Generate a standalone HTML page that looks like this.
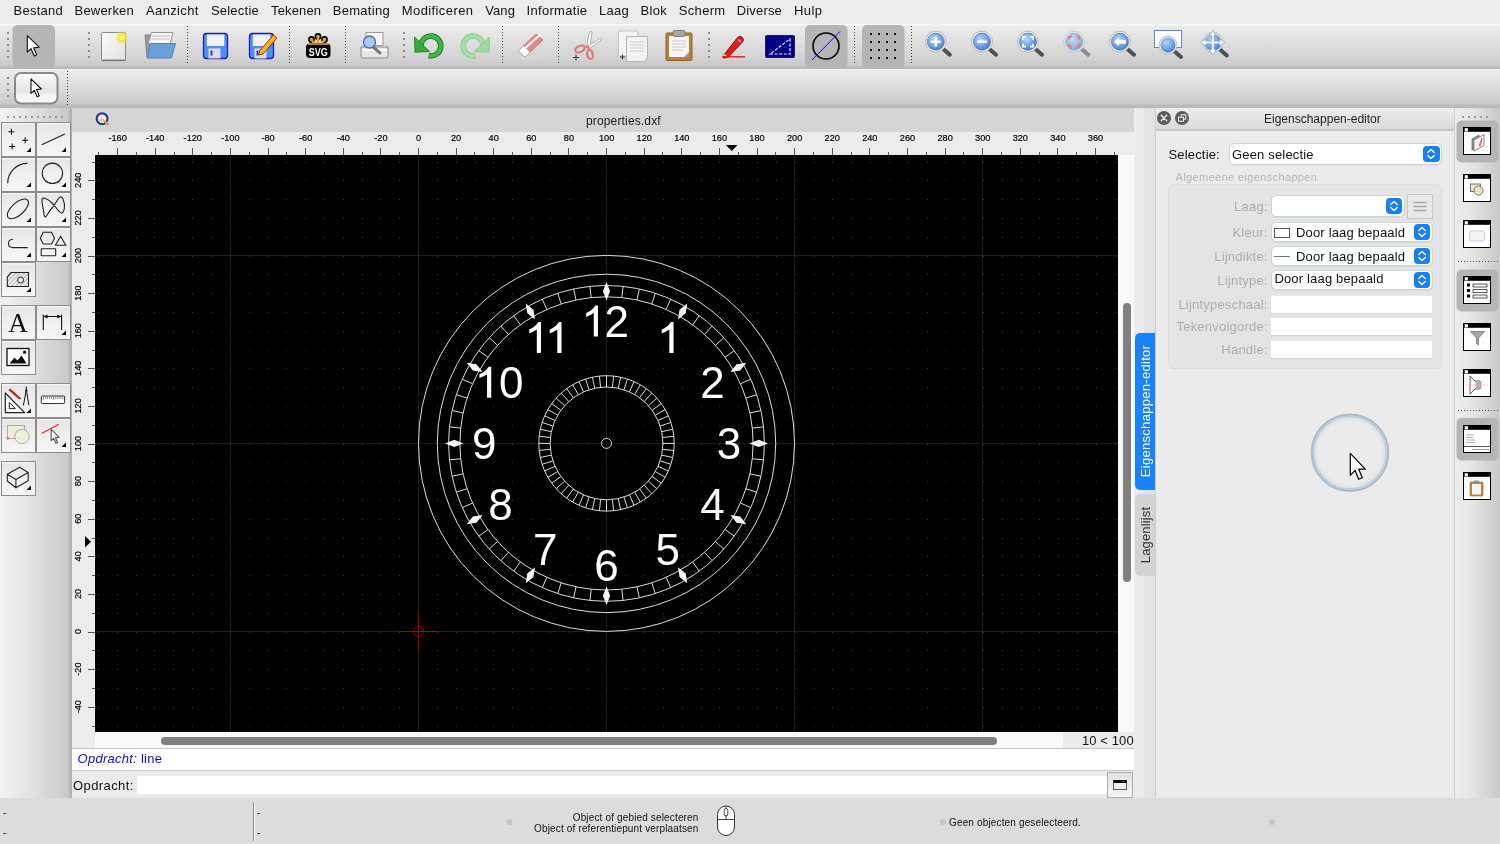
<!DOCTYPE html><html><head><meta charset="utf-8"><style>
*{margin:0;padding:0;box-sizing:border-box}
html,body{width:1500px;height:844px;overflow:hidden;background:#ececec;font-family:"Liberation Sans",sans-serif;color:#222}
.abs{position:absolute;display:block}
.t{position:absolute;white-space:pre;line-height:1}
</style></head><body><div id="root" style="position:absolute;left:0;top:0;width:1500px;height:844px;overflow:hidden;will-change:transform"><div class="abs" style="left:0;top:0;width:1500px;height:24px;background:#ececec"></div><div class="t" style="left:13.5px;top:4px;font-size:13px;color:#111;letter-spacing:0.25px">Bestand</div><div class="t" style="left:74.5px;top:4px;font-size:13px;color:#111;letter-spacing:0.21px">Bewerken</div><div class="t" style="left:146.0px;top:4px;font-size:13px;color:#111;letter-spacing:0.37px">Aanzicht</div><div class="t" style="left:210.9px;top:4px;font-size:13px;color:#111;letter-spacing:0.23px">Selectie</div><div class="t" style="left:271.1px;top:4px;font-size:13px;color:#111;letter-spacing:0.13px">Tekenen</div><div class="t" style="left:332.7px;top:4px;font-size:13px;color:#111;letter-spacing:0.3px">Bemating</div><div class="t" style="left:401.8px;top:4px;font-size:13px;color:#111;letter-spacing:0.4px">Modificeren</div><div class="t" style="left:485.2px;top:4px;font-size:13px;color:#111;letter-spacing:0.1px">Vang</div><div class="t" style="left:526.5px;top:4px;font-size:13px;color:#111;letter-spacing:0.31px">Informatie</div><div class="t" style="left:599.0px;top:4px;font-size:13px;color:#111;letter-spacing:0.27px">Laag</div><div class="t" style="left:640.6px;top:4px;font-size:13px;color:#111;letter-spacing:0.33px">Blok</div><div class="t" style="left:678.8px;top:4px;font-size:13px;color:#111;letter-spacing:0.32px">Scherm</div><div class="t" style="left:736.8px;top:4px;font-size:13px;color:#111;letter-spacing:0.15px">Diverse</div><div class="t" style="left:794.0px;top:4px;font-size:13px;color:#111;letter-spacing:0.4px">Hulp</div><div class="abs" style="left:0;top:24px;width:1500px;height:45px;background:linear-gradient(#f8f8f8 0,#f8f8f8 1px,#ebebeb 2px,#d3d3d3 34px,#c8c8c8 42px,#bababa 43px,#bababa 45px)"></div><div class="abs" style="left:0;top:69px;width:1500px;height:39px;background:linear-gradient(#f2f2f2 0,#ebebeb 2px,#d5d5d5 26px,#c9c9c9 35px,#bababa 36px,#bababa 39px)"></div><svg class="abs" style="left:0;top:24px" width="1500" height="84" viewBox="0 24 1500 84"><defs><linearGradient id="gblue" x1="0" y1="0" x2="0" y2="1"><stop offset="0" stop-color="#8ec0ff"/><stop offset="1" stop-color="#3a7fe8"/></linearGradient><radialGradient id="glens" cx="0.4" cy="0.35" r="0.7"><stop offset="0" stop-color="#b8d6f8"/><stop offset="0.6" stop-color="#6fa3e6"/><stop offset="1" stop-color="#3f78c8"/></radialGradient><radialGradient id="glow" cx="0.5" cy="0.5" r="0.5"><stop offset="0" stop-color="#fffbd0"/><stop offset="0.45" stop-color="#f0ea30"/><stop offset="1" stop-color="#f0ea30" stop-opacity="0"/></radialGradient><linearGradient id="gpaper" x1="0" y1="0" x2="1" y2="1"><stop offset="0" stop-color="#fafafa"/><stop offset="1" stop-color="#e2e2e2"/></linearGradient></defs><rect x="7" y="32" width="2" height="2" fill="#8c8c8c"/><rect x="7" y="38" width="2" height="2" fill="#8c8c8c"/><rect x="7" y="44" width="2" height="2" fill="#8c8c8c"/><rect x="7" y="50" width="2" height="2" fill="#8c8c8c"/><rect x="7" y="56" width="2" height="2" fill="#8c8c8c"/><rect x="12.5" y="25" width="42.5" height="43" rx="5" fill="#b5b5b5"/><path d="M27.30 35.60L27.30 52.20L31.00 48.70L34.30 55.90L36.70 54.80L33.60 47.90L39.10 47.20Z" fill="#fff" stroke="#111" stroke-width="1.1" stroke-linejoin="round"/><rect x="88" y="32" width="2" height="2" fill="#8c8c8c"/><rect x="88" y="38" width="2" height="2" fill="#8c8c8c"/><rect x="88" y="44" width="2" height="2" fill="#8c8c8c"/><rect x="88" y="50" width="2" height="2" fill="#8c8c8c"/><rect x="88" y="56" width="2" height="2" fill="#8c8c8c"/><rect x="101.5" y="32.5" width="24" height="27.5" rx="1" fill="url(#gpaper)" stroke="#8a8a8a" stroke-width="1"/><path d="M102 60.5H125.5" stroke="#777" stroke-width="1.2"/><circle cx="121.7" cy="37.6" r="7" fill="url(#glow)"/><path d="M145 35H151L150 57H147Z" fill="#9a9a9a" stroke="#777" stroke-width="0.8"/><path d="M151.5 32.5H173L170 44H148Z" fill="#f6f6f6" stroke="#8a8a8a" stroke-width="0.9"/><path d="M152 36H170M151.5 39H169" stroke="#bdbdbd" stroke-width="1"/><path d="M150 43.5H175.5L171.5 58H147Z" fill="#6c9fd8" stroke="#4d7fc0" stroke-width="0.9"/><path d="M187.5 26V63" stroke="#444" stroke-width="1" stroke-dasharray="1 2"/><rect x="203.5" y="33.5" width="24" height="25" rx="3" fill="#4d90f4" stroke="#2020a8" stroke-width="1.3"/><rect x="206.8" y="34.5" width="17.5" height="11.5" fill="#eef2ff"/><rect x="208.5" y="48.5" width="12" height="10" fill="#dcdce8"/><rect x="210.5" y="50.5" width="2" height="5" fill="#1a3fd0"/><rect x="249.5" y="33.5" width="24" height="25" rx="3" fill="#4d90f4" stroke="#2020a8" stroke-width="1.3"/><rect x="252.8" y="34.5" width="17.5" height="11.5" fill="#eef2ff"/><rect x="254.5" y="48.5" width="12" height="10" fill="#dcdce8"/><rect x="256.5" y="50.5" width="2" height="5" fill="#1a3fd0"/><path d="M259.5 51L273.5 35L277 38L263 54L258.5 55Z" fill="#f6b820" stroke="#b02a10" stroke-width="1"/><path d="M289.5 26V63" stroke="#444" stroke-width="1" stroke-dasharray="1 2"/><g fill="#f0a030" stroke="#000" stroke-width="1.6"><circle cx="318" cy="36.5" r="2.6"/><circle cx="311.5" cy="39.5" r="2.6"/><circle cx="324.5" cy="39.5" r="2.6"/><path d="M318 37V45M311.5 40L316 45M324.5 40L320 45" stroke-width="2.2" stroke="#f0a030"/></g><rect x="306" y="43.5" width="24.5" height="14.5" rx="4" fill="#000"/><path d="M308 44.2H328.5" stroke="#f0a030" stroke-width="1.2"/><text x="318.2" y="56.2" font-family="Liberation Sans" font-weight="bold" font-size="11" fill="#fff" text-anchor="middle" textLength="19" lengthAdjust="spacingAndGlyphs">SVG</text><path d="M345.5 26V63" stroke="#444" stroke-width="1" stroke-dasharray="1 2"/><rect x="366" y="32.5" width="17" height="13" fill="#f4f4f4" stroke="#9a9a9a" stroke-width="1"/><path d="M361 47H388V56Q388 58 386 58H363Q361 58 361 56Z" fill="#e8e8e8" stroke="#8a8a8a" stroke-width="1"/><path d="M363 50H386" stroke="#fff" stroke-width="1.5"/><path d="M372 46L380 53" stroke="#777" stroke-width="3" stroke-linecap="round"/><circle cx="369.5" cy="42" r="6" fill="#a9c9f0" stroke="#4a6fa8" stroke-width="1.3"/><rect x="403" y="32" width="2" height="2" fill="#8c8c8c"/><rect x="403" y="38" width="2" height="2" fill="#8c8c8c"/><rect x="403" y="44" width="2" height="2" fill="#8c8c8c"/><rect x="403" y="50" width="2" height="2" fill="#8c8c8c"/><rect x="403" y="56" width="2" height="2" fill="#8c8c8c"/><path d="M421 45.5A9.9 9.9 0 1 1 428.6 55.6" fill="none" stroke="#1f7f22" stroke-width="5.6"/><path d="M421 45.5A9.9 9.9 0 1 1 428.6 55.6" fill="none" stroke="#45b548" stroke-width="3.6"/><path d="M414.5 37L415 52.2L429.5 51.5Z" fill="#3aa83d" stroke="#1f7f22" stroke-width="0.9" stroke-linejoin="round"/><path d="M483 45.5A9.9 9.9 0 1 0 475.4 55.6" fill="none" stroke="#8ccc8e" stroke-width="5.6"/><path d="M483 45.5A9.9 9.9 0 1 0 475.4 55.6" fill="none" stroke="#a8dca8" stroke-width="3.6"/><path d="M489.5 37L489 52.2L474.5 51.5Z" fill="#a0d8a2" stroke="#88c88a" stroke-width="0.9" stroke-linejoin="round"/><path d="M502.5 26V63" stroke="#444" stroke-width="1" stroke-dasharray="1 2"/><ellipse cx="530" cy="57" rx="12" ry="1.8" fill="#d8d8d8"/><path d="M518 51L536 34L543 40L525 57Z" fill="#e28a8a" stroke="#c07070" stroke-width="0.8"/><path d="M518 51L523.5 46L530 52L525 57Z" fill="#f8f8f8" stroke="#b0b0b0" stroke-width="0.8"/><path d="M524 49L540 35" stroke="#f6f6f6" stroke-width="2"/><path d="M558.5 26V63" stroke="#444" stroke-width="1" stroke-dasharray="1 2"/><path d="M586.5 47L589.5 31.5L592 32L590 47.5Z" fill="#fafafa" stroke="#a8a8a8" stroke-width="0.9" stroke-linejoin="round"/><path d="M587.5 46.5L600.5 38L601.5 40L589.5 48.5Z" fill="#fafafa" stroke="#a8a8a8" stroke-width="0.9" stroke-linejoin="round"/><g fill="none" stroke="#e07a7a" stroke-width="2.2"><ellipse cx="580" cy="49" rx="5" ry="3" transform="rotate(-25 580 49)"/><ellipse cx="590" cy="54.5" rx="2.8" ry="4.6" transform="rotate(-10 590 54.5)"/><path d="M584.5 47.5L588 46.5L589 50"/></g><path d="M573 57.5H579M576 54.5V60.5" stroke="#333" stroke-width="1"/><path d="M618.5 31H638V56H618.5Z" fill="#f4f4f4" stroke="#c4c4c4" stroke-width="1"/><path d="M626.5 36.5H647.5V58L644 61.5H626.5Z" fill="#f2f2f2" stroke="#b4b4b4" stroke-width="1"/><path d="M630 42H644M630 45H644M630 48H644M630 51H644" stroke="#cfcfcf" stroke-width="1"/><path d="M620 57H625M622.5 54.5V59.5" stroke="#333" stroke-width="1"/><rect x="666" y="33" width="26" height="27.5" rx="1.5" fill="#b8803a" stroke="#8e5e20" stroke-width="1"/><path d="M669 36H689V57H669Z" fill="#f6f6f6"/><path d="M672 41H686M672 44H686M672 47H686M672 50H683" stroke="#c8c8c8" stroke-width="1"/><rect x="673" y="30.5" width="12" height="6" rx="1.5" fill="#a8a8a0" stroke="#707070" stroke-width="0.8"/><path d="M684 57L689 52V57Z" fill="#9a9a9a"/><rect x="708" y="32" width="2" height="2" fill="#8c8c8c"/><rect x="708" y="38" width="2" height="2" fill="#8c8c8c"/><rect x="708" y="44" width="2" height="2" fill="#8c8c8c"/><rect x="708" y="50" width="2" height="2" fill="#8c8c8c"/><rect x="708" y="56" width="2" height="2" fill="#8c8c8c"/><path d="M723 56L737.5 37.5Q740 35 742.5 37.5Q744.5 40 742.5 42L728 57.5L723 58Z" fill="#d82020" stroke="#801010" stroke-width="0.9"/><path d="M723 56L728 57.5L726 55L724 54Z" fill="#f0d090"/><path d="M738 39.5L741 42" stroke="#f0b0b0" stroke-width="1.5"/><path d="M723 56.8H745" stroke="#e01010" stroke-width="1.3"/><rect x="765.5" y="35.5" width="29" height="22" rx="1" fill="#00008a" stroke="#202040" stroke-width="1"/><path d="M770 54H790V39Z" fill="none" stroke="#e8e8f8" stroke-width="1.2" stroke-dasharray="3 1.6"/><rect x="805" y="25" width="42.5" height="43" rx="5" fill="#b5b5b5"/><circle cx="826" cy="46" r="13" fill="none" stroke="#000" stroke-width="1.6"/><path d="M812 60L840 31.5" stroke="#1010ff" stroke-width="1"/><path d="M854.5 26V63" stroke="#444" stroke-width="1" stroke-dasharray="1 2"/><rect x="862" y="25" width="42.5" height="43" rx="5" fill="#b5b5b5"/><rect x="870" y="33" width="2" height="2" fill="#111"/><rect x="870" y="41" width="2" height="2" fill="#111"/><rect x="870" y="49" width="2" height="2" fill="#111"/><rect x="870" y="57" width="2" height="2" fill="#111"/><rect x="878" y="33" width="2" height="2" fill="#111"/><rect x="878" y="41" width="2" height="2" fill="#111"/><rect x="878" y="49" width="2" height="2" fill="#111"/><rect x="878" y="57" width="2" height="2" fill="#111"/><rect x="886" y="33" width="2" height="2" fill="#111"/><rect x="886" y="41" width="2" height="2" fill="#111"/><rect x="886" y="49" width="2" height="2" fill="#111"/><rect x="886" y="57" width="2" height="2" fill="#111"/><rect x="894" y="33" width="2" height="2" fill="#111"/><rect x="894" y="41" width="2" height="2" fill="#111"/><rect x="894" y="49" width="2" height="2" fill="#111"/><rect x="894" y="57" width="2" height="2" fill="#111"/><path d="M911.5 26V63" stroke="#444" stroke-width="1" stroke-dasharray="1 2"/><g><path d="M941.8 47.7L949.8 54.7" stroke="#505050" stroke-width="4" stroke-linecap="round"/><circle cx="935.8" cy="41.7" r="10.5" fill="#f0f0ea" stroke="#b8b8b0" stroke-width="1"/><circle cx="935.8" cy="41.7" r="8.5" fill="url(#glens)" stroke="#4a78b8" stroke-width="0.8"/><path d="M930.8 41.7H940.8M935.8 36.7V46.7" stroke="#fff" stroke-width="2.6"/></g><g><path d="M988 47.7L996 54.7" stroke="#505050" stroke-width="4" stroke-linecap="round"/><circle cx="982" cy="41.7" r="10.5" fill="#f0f0ea" stroke="#b8b8b0" stroke-width="1"/><circle cx="982" cy="41.7" r="8.5" fill="url(#glens)" stroke="#4a78b8" stroke-width="0.8"/><path d="M977 41.7H987" stroke="#fff" stroke-width="2.6"/></g><g><path d="M1034 47.7L1042 54.7" stroke="#505050" stroke-width="4" stroke-linecap="round"/><circle cx="1028" cy="41.7" r="10.5" fill="#f0f0ea" stroke="#b8b8b0" stroke-width="1"/><circle cx="1028" cy="41.7" r="8.5" fill="url(#glens)" stroke="#4a78b8" stroke-width="0.8"/><path d="M1023 39.7V36.7H1026M1030 36.7H1033V39.7M1033 43.7V46.7H1030M1026 46.7H1023V43.7" fill="none" stroke="#fff" stroke-width="1.8"/></g><g opacity="0.55"><path d="M1080.2 47.7L1088.2 54.7" stroke="#505050" stroke-width="4" stroke-linecap="round"/><circle cx="1074.2" cy="41.7" r="10.5" fill="#f0f0ea" stroke="#b8b8b0" stroke-width="1"/><circle cx="1074.2" cy="41.7" r="8.5" fill="url(#glens)" stroke="#4a78b8" stroke-width="0.8"/><path d="M1069.2 39.7V36.7H1072.2M1076.2 36.7H1079.2V39.7M1079.2 43.7V46.7H1076.2M1072.2 46.7H1069.2V43.7" fill="none" stroke="#e83030" stroke-width="1.8"/></g><g><path d="M1126 47.7L1134 54.7" stroke="#505050" stroke-width="4" stroke-linecap="round"/><circle cx="1120" cy="41.7" r="10.5" fill="#f0f0ea" stroke="#b8b8b0" stroke-width="1"/><circle cx="1120" cy="41.7" r="8.5" fill="url(#glens)" stroke="#4a78b8" stroke-width="0.8"/><path d="M1114 41.7L1119 37.2V39.7H1126V43.7H1119V46.2Z" fill="#fff"/></g><rect x="1154.5" y="30.5" width="27" height="17" fill="#fff" stroke="#5a8ad0" stroke-width="1"/><path d="M1174 51L1181 57" stroke="#505050" stroke-width="4" stroke-linecap="round"/><circle cx="1168" cy="45" r="9" fill="#f0f0ea" stroke="#b8b8b0" stroke-width="1"/><circle cx="1168" cy="45" r="7.5" fill="url(#glens)"/><path d="M1218.8 48.5L1226.8 55.5" stroke="#505050" stroke-width="4" stroke-linecap="round"/><circle cx="1212.8" cy="42.5" r="10" fill="#e8e8e0" stroke="#b8b8b0" stroke-width="1"/><circle cx="1212.8" cy="42.5" r="8.5" fill="url(#glens)"/><path d="M1212.8 30.5L1216.3 35.5H1214.1V41.2H1219.8V39.0L1224.8 42.5L1219.8 46.0V43.8H1214.1V49.5H1216.3L1212.8 54.5L1209.3 49.5H1211.5V43.8H1205.8V46.0L1200.8 42.5L1205.8 39.0V41.2H1211.5V35.5H1209.3Z" fill="#fff" stroke="#6a9ad8" stroke-width="0.6"/><rect x="7" y="77" width="2" height="2" fill="#8c8c8c"/><rect x="7" y="83" width="2" height="2" fill="#8c8c8c"/><rect x="7" y="89" width="2" height="2" fill="#8c8c8c"/><rect x="7" y="95" width="2" height="2" fill="#8c8c8c"/><rect x="15" y="73" width="42.5" height="30.5" rx="6" fill="url(#gbtn2)" stroke="#8a8a8a" stroke-width="2"/><defs><linearGradient id="gbtn2" x1="0" y1="0" x2="0" y2="1"><stop offset="0" stop-color="#fbfbfb"/><stop offset="0.62" stop-color="#e4e4e4"/><stop offset="0.75" stop-color="#f6f6f6"/><stop offset="1" stop-color="#f8f8f8"/></linearGradient></defs><path d="M31.00 78.80L31.00 93.41L34.26 90.33L37.16 96.66L39.27 95.70L36.54 89.62L41.38 89.01Z" fill="#fff" stroke="#111" stroke-width="1.1" stroke-linejoin="round"/><path d="M67.5 71V105" stroke="#444" stroke-width="1" stroke-dasharray="1 2"/></svg><div class="abs" style="left:0;top:108px;width:72px;height:690px;background:linear-gradient(90deg,#f2f2f2,#e8e8e8 30%,#c9c9c9 68px,#b3b3b3 70px,#b3b3b3)"></div><svg class="abs" style="left:0;top:108px" width="72" height="690" viewBox="0 108 72 690"><defs><linearGradient id="gpb" x1="0" y1="0" x2="0" y2="1"><stop offset="0" stop-color="#fdfdfd"/><stop offset="0.08" stop-color="#e6e6e6"/><stop offset="0.45" stop-color="#efefef"/><stop offset="1" stop-color="#f6f6f6"/></linearGradient></defs><rect x="7" y="116" width="2" height="2" fill="#9a9a9a"/><rect x="13" y="116" width="2" height="2" fill="#9a9a9a"/><rect x="19" y="116" width="2" height="2" fill="#9a9a9a"/><rect x="25" y="116" width="2" height="2" fill="#9a9a9a"/><rect x="31" y="116" width="2" height="2" fill="#9a9a9a"/><rect x="37" y="116" width="2" height="2" fill="#9a9a9a"/><rect x="43" y="116" width="2" height="2" fill="#9a9a9a"/><rect x="49" y="116" width="2" height="2" fill="#9a9a9a"/><rect x="55" y="116" width="2" height="2" fill="#9a9a9a"/><rect x="61" y="116" width="2" height="2" fill="#9a9a9a"/><rect x="1.5" y="122.5" width="34" height="34" fill="url(#gpb)" stroke="#8c8c8c" stroke-width="1"/><rect x="36.5" y="122.5" width="34" height="34" fill="url(#gpb)" stroke="#8c8c8c" stroke-width="1"/><rect x="1.5" y="157.5" width="34" height="34" fill="url(#gpb)" stroke="#8c8c8c" stroke-width="1"/><rect x="36.5" y="157.5" width="34" height="34" fill="url(#gpb)" stroke="#8c8c8c" stroke-width="1"/><rect x="1.5" y="192.5" width="34" height="34" fill="url(#gpb)" stroke="#8c8c8c" stroke-width="1"/><rect x="36.5" y="192.5" width="34" height="34" fill="url(#gpb)" stroke="#8c8c8c" stroke-width="1"/><rect x="1.5" y="227.5" width="34" height="34" fill="url(#gpb)" stroke="#8c8c8c" stroke-width="1"/><rect x="36.5" y="227.5" width="34" height="34" fill="url(#gpb)" stroke="#8c8c8c" stroke-width="1"/><rect x="1.5" y="262.5" width="34" height="34" fill="url(#gpb)" stroke="#8c8c8c" stroke-width="1"/><rect x="1.5" y="305.5" width="34" height="34" fill="url(#gpb)" stroke="#8c8c8c" stroke-width="1"/><rect x="36.5" y="305.5" width="34" height="34" fill="url(#gpb)" stroke="#8c8c8c" stroke-width="1"/><rect x="1.5" y="340.5" width="34" height="34" fill="url(#gpb)" stroke="#8c8c8c" stroke-width="1"/><rect x="1.5" y="383.5" width="34" height="34" fill="url(#gpb)" stroke="#8c8c8c" stroke-width="1"/><rect x="36.5" y="383.5" width="34" height="34" fill="url(#gpb)" stroke="#8c8c8c" stroke-width="1"/><rect x="1.5" y="418.5" width="34" height="34" fill="url(#gpb)" stroke="#8c8c8c" stroke-width="1"/><rect x="36.5" y="418.5" width="34" height="34" fill="url(#gpb)" stroke="#8c8c8c" stroke-width="1"/><rect x="1.5" y="461.5" width="34" height="34" fill="url(#gpb)" stroke="#8c8c8c" stroke-width="1"/><path d="M8.4 131.7H14.4M11.4 128.7V134.7" stroke="#111" stroke-width="1.1"/><path d="M22.2 140.3H28.2M25.2 137.3V143.3" stroke="#111" stroke-width="1.1"/><path d="M9.2 146.5H15.2M12.2 143.5V149.5" stroke="#111" stroke-width="1.1"/><path d="M26.5 152H31V147.5Z" fill="#000"/><path d="M61.5 152H66V147.5Z" fill="#000"/><path d="M41.7 144.7L64.9 134" stroke="#222" fill="none" stroke-width="1.2"/><path d="M7.7 183.2A19.8 19.8 0 0 1 27.5 163.4" stroke="#222" fill="none" stroke-width="1.2"/><path d="M26.5 187H31V182.5Z" fill="#000"/><path d="M61.5 187H66V182.5Z" fill="#000"/><circle cx="52.4" cy="173.3" r="10.2" stroke="#222" fill="none" stroke-width="1.1"/><ellipse cx="17.9" cy="208.9" rx="13" ry="6.2" transform="rotate(-42 17.9 208.9)" stroke="#222" fill="none" stroke-width="1.1"/><path d="M26.5 222H31V217.5Z" fill="#000"/><path d="M61.5 222H66V217.5Z" fill="#000"/><path d="M42 201C41 196 47 198 52 203S60 214 62 213S66 206 63 199S56 204 52 208S45 222 44 214S42 205 42 201Z" stroke="#222" fill="none" stroke-width="1.1"/><path d="M13 239.3Q8.5 239.5 8.5 243.5Q8.5 247.6 13 247.6H27.8" stroke="#222" fill="none" stroke-width="1.1"/><path d="M26.5 257H31V252.5Z" fill="#000"/><path d="M61.5 257H66V252.5Z" fill="#000"/><path d="M43.2 232.3H51.5L54.5 238.2L51.5 244H43.2L40.3 238.2Z" stroke="#222" fill="none" stroke-width="1.1"/><path d="M60.6 236.3L65.8 245.2H55.4Z" stroke="#222" fill="none" stroke-width="1.1"/><rect x="41.2" y="248.8" width="14.5" height="7" rx="0.5" stroke="#222" fill="none" stroke-width="1.1"/><defs><pattern id="hp" width="3" height="3" patternUnits="userSpaceOnUse" patternTransform="rotate(45)"><path d="M0 0V3" stroke="#555" stroke-width="0.8"/></pattern></defs><path d="M11 272.5H28.5V286.5H7.3V277Z" fill="url(#hp)" stroke="#222" stroke-width="1.1"/><circle cx="20.5" cy="280" r="3" fill="#f0f0f0" stroke="#222" stroke-width="1"/><path d="M26.5 292H31V287.5Z" fill="#000"/><text x="17.9" y="332" font-family="Liberation Serif" font-size="27" fill="#111" text-anchor="middle">A</text><path d="M43.3 314.5V330M61.6 314.5V330M44 316.5H61" stroke="#111" stroke-width="1.1"/><path d="M43.5 316.5L47.5 314.5V318.5ZM61.3 316.5L57.3 314.5V318.5Z" fill="#111"/><path d="M61.5 335H66V330.5Z" fill="#000"/><rect x="7" y="348.5" width="22" height="17" fill="#fff" stroke="#111" stroke-width="1.3"/><path d="M9.5 363.5L14.5 357.5L17.5 360.5L21.5 355.5L26.5 363.5Z" fill="#111"/><circle cx="24.6" cy="352.2" r="1.6" fill="#111"/><path d="M5.3 393V412.6H24.6Z" fill="#fff" stroke="#222" stroke-width="1.2" stroke-linejoin="round"/><path d="M9.3 402.4V408.6H15.4Z" fill="#eee" stroke="#222" stroke-width="1"/><path d="M10 388.8L19.6 397.3L21 399L18.5 398.4L9 390.2Z" fill="#e02020" stroke="#a01010" stroke-width="0.7"/><path d="M26.3 386.5V390M26.3 390L23.4 405.5M26.3 390L28.9 405.3" stroke="#111" stroke-width="1"/><circle cx="26.3" cy="390.6" r="1.2" fill="#111"/><path d="M26.5 413H31V408.5Z" fill="#000"/><rect x="41.3" y="396" width="23.3" height="7.5" rx="0.8" fill="#fff" stroke="#333" stroke-width="1"/><path d="M43.3 396.5V400M45.4 396.5V399M47.5 396.5V399M49.6 396.5V399M51.7 396.5V399M53.8 396.5V400M55.9 396.5V399M58.0 396.5V399M60.1 396.5V399M62.2 396.5V399M64.3 396.5V400" stroke="#333" stroke-width="0.6"/><rect x="7.5" y="425.5" width="17" height="13" fill="#f0ecd8" stroke="#999" stroke-width="0.8"/><circle cx="22" cy="436.5" r="7.2" fill="#f2eed8" fill-opacity="0.9" stroke="#999" stroke-width="0.8"/><circle cx="7.8" cy="438.4" r="1.3" fill="#f07070"/><path d="M41.7 433.4L58.7 424.3" stroke="#e82020" stroke-width="1.1"/><path d="M51.20 429.40L51.20 440.69L53.72 438.31L55.96 443.20L57.59 442.46L55.48 437.76L59.22 437.29Z" fill="#fff" stroke="#555" stroke-width="1.1" stroke-linejoin="round"/><path d="M61.5 447H66V442.5Z" fill="#000"/><path d="M7.3 474.3L19.6 467.3L28.2 472.5L15.9 479.5ZM7.3 474.3V481L15.9 487.8V479.5M15.9 487.8L28.2 480.8V472.5" fill="none" stroke="#222" stroke-width="1.1" stroke-linejoin="round"/><path d="M26.5 490H31V485.5Z" fill="#000"/></svg><div class="abs" style="left:72px;top:108px;width:1062px;height:24px;background:#d5d5d5"></div><div class="t" style="left:586px;top:115px;font-size:12px;color:#1a1a1a;letter-spacing:0.15px">properties.dxf</div><svg class="abs" style="left:94px;top:111px" width="17" height="17" viewBox="94 111 17 17"><circle cx="102.1" cy="118.7" r="5.4" fill="#f6f6f6" stroke="#2a3f8a" stroke-width="2.2"/><path d="M98.5 119.5H104M101.5 116V121.5" stroke="#b0b0b0" stroke-width="0.6"/><path d="M99 120.5L102 121M103.5 115.5L104.5 117" stroke="#e08080" stroke-width="0.6"/><path d="M102.8 119.3L107 123.5" stroke="#f0b020" stroke-width="1.8"/><circle cx="107.8" cy="124.3" r="1.1" fill="#e07070"/></svg><div class="abs" style="left:72px;top:132px;width:1062px;height:23px;background:#ececec"></div><div class="abs" style="left:72px;top:155px;width:23px;height:593px;background:#ececec"></div><svg class="abs" style="left:95px;top:155px" width="1023" height="577" viewBox="95 155 1023 577"><rect x="95" y="155" width="1023" height="577" fill="#000"/><path d="M230.5 155V732M418.5 155V732M606.5 155V732M794.5 155V732M982.5 155V732M95 631.5H1118M95 443.5H1118M95 255.5H1118" stroke="#1e1e1e" stroke-width="1"/><path d="M98 726h1v1h-1zM98 707h1v1h-1zM98 688h1v1h-1zM98 669h1v1h-1zM98 650h1v1h-1zM98 632h1v1h-1zM98 613h1v1h-1zM98 594h1v1h-1zM98 575h1v1h-1zM98 556h1v1h-1zM98 538h1v1h-1zM98 519h1v1h-1zM98 500h1v1h-1zM98 481h1v1h-1zM98 462h1v1h-1zM98 444h1v1h-1zM98 425h1v1h-1zM98 406h1v1h-1zM98 387h1v1h-1zM98 368h1v1h-1zM98 350h1v1h-1zM98 331h1v1h-1zM98 312h1v1h-1zM98 293h1v1h-1zM98 274h1v1h-1zM98 256h1v1h-1zM98 237h1v1h-1zM98 218h1v1h-1zM98 199h1v1h-1zM98 180h1v1h-1zM98 162h1v1h-1zM117 726h1v1h-1zM117 707h1v1h-1zM117 688h1v1h-1zM117 669h1v1h-1zM117 650h1v1h-1zM117 632h1v1h-1zM117 613h1v1h-1zM117 594h1v1h-1zM117 575h1v1h-1zM117 556h1v1h-1zM117 538h1v1h-1zM117 519h1v1h-1zM117 500h1v1h-1zM117 481h1v1h-1zM117 462h1v1h-1zM117 444h1v1h-1zM117 425h1v1h-1zM117 406h1v1h-1zM117 387h1v1h-1zM117 368h1v1h-1zM117 350h1v1h-1zM117 331h1v1h-1zM117 312h1v1h-1zM117 293h1v1h-1zM117 274h1v1h-1zM117 256h1v1h-1zM117 237h1v1h-1zM117 218h1v1h-1zM117 199h1v1h-1zM117 180h1v1h-1zM117 162h1v1h-1zM136 726h1v1h-1zM136 707h1v1h-1zM136 688h1v1h-1zM136 669h1v1h-1zM136 650h1v1h-1zM136 632h1v1h-1zM136 613h1v1h-1zM136 594h1v1h-1zM136 575h1v1h-1zM136 556h1v1h-1zM136 538h1v1h-1zM136 519h1v1h-1zM136 500h1v1h-1zM136 481h1v1h-1zM136 462h1v1h-1zM136 444h1v1h-1zM136 425h1v1h-1zM136 406h1v1h-1zM136 387h1v1h-1zM136 368h1v1h-1zM136 350h1v1h-1zM136 331h1v1h-1zM136 312h1v1h-1zM136 293h1v1h-1zM136 274h1v1h-1zM136 256h1v1h-1zM136 237h1v1h-1zM136 218h1v1h-1zM136 199h1v1h-1zM136 180h1v1h-1zM136 162h1v1h-1zM154 726h1v1h-1zM154 707h1v1h-1zM154 688h1v1h-1zM154 669h1v1h-1zM154 650h1v1h-1zM154 632h1v1h-1zM154 613h1v1h-1zM154 594h1v1h-1zM154 575h1v1h-1zM154 556h1v1h-1zM154 538h1v1h-1zM154 519h1v1h-1zM154 500h1v1h-1zM154 481h1v1h-1zM154 462h1v1h-1zM154 444h1v1h-1zM154 425h1v1h-1zM154 406h1v1h-1zM154 387h1v1h-1zM154 368h1v1h-1zM154 350h1v1h-1zM154 331h1v1h-1zM154 312h1v1h-1zM154 293h1v1h-1zM154 274h1v1h-1zM154 256h1v1h-1zM154 237h1v1h-1zM154 218h1v1h-1zM154 199h1v1h-1zM154 180h1v1h-1zM154 162h1v1h-1zM173 726h1v1h-1zM173 707h1v1h-1zM173 688h1v1h-1zM173 669h1v1h-1zM173 650h1v1h-1zM173 632h1v1h-1zM173 613h1v1h-1zM173 594h1v1h-1zM173 575h1v1h-1zM173 556h1v1h-1zM173 538h1v1h-1zM173 519h1v1h-1zM173 500h1v1h-1zM173 481h1v1h-1zM173 462h1v1h-1zM173 444h1v1h-1zM173 425h1v1h-1zM173 406h1v1h-1zM173 387h1v1h-1zM173 368h1v1h-1zM173 350h1v1h-1zM173 331h1v1h-1zM173 312h1v1h-1zM173 293h1v1h-1zM173 274h1v1h-1zM173 256h1v1h-1zM173 237h1v1h-1zM173 218h1v1h-1zM173 199h1v1h-1zM173 180h1v1h-1zM173 162h1v1h-1zM192 726h1v1h-1zM192 707h1v1h-1zM192 688h1v1h-1zM192 669h1v1h-1zM192 650h1v1h-1zM192 632h1v1h-1zM192 613h1v1h-1zM192 594h1v1h-1zM192 575h1v1h-1zM192 556h1v1h-1zM192 538h1v1h-1zM192 519h1v1h-1zM192 500h1v1h-1zM192 481h1v1h-1zM192 462h1v1h-1zM192 444h1v1h-1zM192 425h1v1h-1zM192 406h1v1h-1zM192 387h1v1h-1zM192 368h1v1h-1zM192 350h1v1h-1zM192 331h1v1h-1zM192 312h1v1h-1zM192 293h1v1h-1zM192 274h1v1h-1zM192 256h1v1h-1zM192 237h1v1h-1zM192 218h1v1h-1zM192 199h1v1h-1zM192 180h1v1h-1zM192 162h1v1h-1zM211 726h1v1h-1zM211 707h1v1h-1zM211 688h1v1h-1zM211 669h1v1h-1zM211 650h1v1h-1zM211 632h1v1h-1zM211 613h1v1h-1zM211 594h1v1h-1zM211 575h1v1h-1zM211 556h1v1h-1zM211 538h1v1h-1zM211 519h1v1h-1zM211 500h1v1h-1zM211 481h1v1h-1zM211 462h1v1h-1zM211 444h1v1h-1zM211 425h1v1h-1zM211 406h1v1h-1zM211 387h1v1h-1zM211 368h1v1h-1zM211 350h1v1h-1zM211 331h1v1h-1zM211 312h1v1h-1zM211 293h1v1h-1zM211 274h1v1h-1zM211 256h1v1h-1zM211 237h1v1h-1zM211 218h1v1h-1zM211 199h1v1h-1zM211 180h1v1h-1zM211 162h1v1h-1zM230 726h1v1h-1zM230 707h1v1h-1zM230 688h1v1h-1zM230 669h1v1h-1zM230 650h1v1h-1zM230 632h1v1h-1zM230 613h1v1h-1zM230 594h1v1h-1zM230 575h1v1h-1zM230 556h1v1h-1zM230 538h1v1h-1zM230 519h1v1h-1zM230 500h1v1h-1zM230 481h1v1h-1zM230 462h1v1h-1zM230 444h1v1h-1zM230 425h1v1h-1zM230 406h1v1h-1zM230 387h1v1h-1zM230 368h1v1h-1zM230 350h1v1h-1zM230 331h1v1h-1zM230 312h1v1h-1zM230 293h1v1h-1zM230 274h1v1h-1zM230 256h1v1h-1zM230 237h1v1h-1zM230 218h1v1h-1zM230 199h1v1h-1zM230 180h1v1h-1zM230 162h1v1h-1zM249 726h1v1h-1zM249 707h1v1h-1zM249 688h1v1h-1zM249 669h1v1h-1zM249 650h1v1h-1zM249 632h1v1h-1zM249 613h1v1h-1zM249 594h1v1h-1zM249 575h1v1h-1zM249 556h1v1h-1zM249 538h1v1h-1zM249 519h1v1h-1zM249 500h1v1h-1zM249 481h1v1h-1zM249 462h1v1h-1zM249 444h1v1h-1zM249 425h1v1h-1zM249 406h1v1h-1zM249 387h1v1h-1zM249 368h1v1h-1zM249 350h1v1h-1zM249 331h1v1h-1zM249 312h1v1h-1zM249 293h1v1h-1zM249 274h1v1h-1zM249 256h1v1h-1zM249 237h1v1h-1zM249 218h1v1h-1zM249 199h1v1h-1zM249 180h1v1h-1zM249 162h1v1h-1zM267 726h1v1h-1zM267 707h1v1h-1zM267 688h1v1h-1zM267 669h1v1h-1zM267 650h1v1h-1zM267 632h1v1h-1zM267 613h1v1h-1zM267 594h1v1h-1zM267 575h1v1h-1zM267 556h1v1h-1zM267 538h1v1h-1zM267 519h1v1h-1zM267 500h1v1h-1zM267 481h1v1h-1zM267 462h1v1h-1zM267 444h1v1h-1zM267 425h1v1h-1zM267 406h1v1h-1zM267 387h1v1h-1zM267 368h1v1h-1zM267 350h1v1h-1zM267 331h1v1h-1zM267 312h1v1h-1zM267 293h1v1h-1zM267 274h1v1h-1zM267 256h1v1h-1zM267 237h1v1h-1zM267 218h1v1h-1zM267 199h1v1h-1zM267 180h1v1h-1zM267 162h1v1h-1zM286 726h1v1h-1zM286 707h1v1h-1zM286 688h1v1h-1zM286 669h1v1h-1zM286 650h1v1h-1zM286 632h1v1h-1zM286 613h1v1h-1zM286 594h1v1h-1zM286 575h1v1h-1zM286 556h1v1h-1zM286 538h1v1h-1zM286 519h1v1h-1zM286 500h1v1h-1zM286 481h1v1h-1zM286 462h1v1h-1zM286 444h1v1h-1zM286 425h1v1h-1zM286 406h1v1h-1zM286 387h1v1h-1zM286 368h1v1h-1zM286 350h1v1h-1zM286 331h1v1h-1zM286 312h1v1h-1zM286 293h1v1h-1zM286 274h1v1h-1zM286 256h1v1h-1zM286 237h1v1h-1zM286 218h1v1h-1zM286 199h1v1h-1zM286 180h1v1h-1zM286 162h1v1h-1zM305 726h1v1h-1zM305 707h1v1h-1zM305 688h1v1h-1zM305 669h1v1h-1zM305 650h1v1h-1zM305 632h1v1h-1zM305 613h1v1h-1zM305 594h1v1h-1zM305 575h1v1h-1zM305 556h1v1h-1zM305 538h1v1h-1zM305 519h1v1h-1zM305 500h1v1h-1zM305 481h1v1h-1zM305 462h1v1h-1zM305 444h1v1h-1zM305 425h1v1h-1zM305 406h1v1h-1zM305 387h1v1h-1zM305 368h1v1h-1zM305 350h1v1h-1zM305 331h1v1h-1zM305 312h1v1h-1zM305 293h1v1h-1zM305 274h1v1h-1zM305 256h1v1h-1zM305 237h1v1h-1zM305 218h1v1h-1zM305 199h1v1h-1zM305 180h1v1h-1zM305 162h1v1h-1zM324 726h1v1h-1zM324 707h1v1h-1zM324 688h1v1h-1zM324 669h1v1h-1zM324 650h1v1h-1zM324 632h1v1h-1zM324 613h1v1h-1zM324 594h1v1h-1zM324 575h1v1h-1zM324 556h1v1h-1zM324 538h1v1h-1zM324 519h1v1h-1zM324 500h1v1h-1zM324 481h1v1h-1zM324 462h1v1h-1zM324 444h1v1h-1zM324 425h1v1h-1zM324 406h1v1h-1zM324 387h1v1h-1zM324 368h1v1h-1zM324 350h1v1h-1zM324 331h1v1h-1zM324 312h1v1h-1zM324 293h1v1h-1zM324 274h1v1h-1zM324 256h1v1h-1zM324 237h1v1h-1zM324 218h1v1h-1zM324 199h1v1h-1zM324 180h1v1h-1zM324 162h1v1h-1zM343 726h1v1h-1zM343 707h1v1h-1zM343 688h1v1h-1zM343 669h1v1h-1zM343 650h1v1h-1zM343 632h1v1h-1zM343 613h1v1h-1zM343 594h1v1h-1zM343 575h1v1h-1zM343 556h1v1h-1zM343 538h1v1h-1zM343 519h1v1h-1zM343 500h1v1h-1zM343 481h1v1h-1zM343 462h1v1h-1zM343 444h1v1h-1zM343 425h1v1h-1zM343 406h1v1h-1zM343 387h1v1h-1zM343 368h1v1h-1zM343 350h1v1h-1zM343 331h1v1h-1zM343 312h1v1h-1zM343 293h1v1h-1zM343 274h1v1h-1zM343 256h1v1h-1zM343 237h1v1h-1zM343 218h1v1h-1zM343 199h1v1h-1zM343 180h1v1h-1zM343 162h1v1h-1zM362 726h1v1h-1zM362 707h1v1h-1zM362 688h1v1h-1zM362 669h1v1h-1zM362 650h1v1h-1zM362 632h1v1h-1zM362 613h1v1h-1zM362 594h1v1h-1zM362 575h1v1h-1zM362 556h1v1h-1zM362 538h1v1h-1zM362 519h1v1h-1zM362 500h1v1h-1zM362 481h1v1h-1zM362 462h1v1h-1zM362 444h1v1h-1zM362 425h1v1h-1zM362 406h1v1h-1zM362 387h1v1h-1zM362 368h1v1h-1zM362 350h1v1h-1zM362 331h1v1h-1zM362 312h1v1h-1zM362 293h1v1h-1zM362 274h1v1h-1zM362 256h1v1h-1zM362 237h1v1h-1zM362 218h1v1h-1zM362 199h1v1h-1zM362 180h1v1h-1zM362 162h1v1h-1zM380 726h1v1h-1zM380 707h1v1h-1zM380 688h1v1h-1zM380 669h1v1h-1zM380 650h1v1h-1zM380 632h1v1h-1zM380 613h1v1h-1zM380 594h1v1h-1zM380 575h1v1h-1zM380 556h1v1h-1zM380 538h1v1h-1zM380 519h1v1h-1zM380 500h1v1h-1zM380 481h1v1h-1zM380 462h1v1h-1zM380 444h1v1h-1zM380 425h1v1h-1zM380 406h1v1h-1zM380 387h1v1h-1zM380 368h1v1h-1zM380 350h1v1h-1zM380 331h1v1h-1zM380 312h1v1h-1zM380 293h1v1h-1zM380 274h1v1h-1zM380 256h1v1h-1zM380 237h1v1h-1zM380 218h1v1h-1zM380 199h1v1h-1zM380 180h1v1h-1zM380 162h1v1h-1zM399 726h1v1h-1zM399 707h1v1h-1zM399 688h1v1h-1zM399 669h1v1h-1zM399 650h1v1h-1zM399 632h1v1h-1zM399 613h1v1h-1zM399 594h1v1h-1zM399 575h1v1h-1zM399 556h1v1h-1zM399 538h1v1h-1zM399 519h1v1h-1zM399 500h1v1h-1zM399 481h1v1h-1zM399 462h1v1h-1zM399 444h1v1h-1zM399 425h1v1h-1zM399 406h1v1h-1zM399 387h1v1h-1zM399 368h1v1h-1zM399 350h1v1h-1zM399 331h1v1h-1zM399 312h1v1h-1zM399 293h1v1h-1zM399 274h1v1h-1zM399 256h1v1h-1zM399 237h1v1h-1zM399 218h1v1h-1zM399 199h1v1h-1zM399 180h1v1h-1zM399 162h1v1h-1zM418 726h1v1h-1zM418 707h1v1h-1zM418 688h1v1h-1zM418 669h1v1h-1zM418 650h1v1h-1zM418 632h1v1h-1zM418 613h1v1h-1zM418 594h1v1h-1zM418 575h1v1h-1zM418 556h1v1h-1zM418 538h1v1h-1zM418 519h1v1h-1zM418 500h1v1h-1zM418 481h1v1h-1zM418 462h1v1h-1zM418 444h1v1h-1zM418 425h1v1h-1zM418 406h1v1h-1zM418 387h1v1h-1zM418 368h1v1h-1zM418 350h1v1h-1zM418 331h1v1h-1zM418 312h1v1h-1zM418 293h1v1h-1zM418 274h1v1h-1zM418 256h1v1h-1zM418 237h1v1h-1zM418 218h1v1h-1zM418 199h1v1h-1zM418 180h1v1h-1zM418 162h1v1h-1zM437 726h1v1h-1zM437 707h1v1h-1zM437 688h1v1h-1zM437 669h1v1h-1zM437 650h1v1h-1zM437 632h1v1h-1zM437 613h1v1h-1zM437 594h1v1h-1zM437 575h1v1h-1zM437 556h1v1h-1zM437 538h1v1h-1zM437 519h1v1h-1zM437 500h1v1h-1zM437 481h1v1h-1zM437 462h1v1h-1zM437 444h1v1h-1zM437 425h1v1h-1zM437 406h1v1h-1zM437 387h1v1h-1zM437 368h1v1h-1zM437 350h1v1h-1zM437 331h1v1h-1zM437 312h1v1h-1zM437 293h1v1h-1zM437 274h1v1h-1zM437 256h1v1h-1zM437 237h1v1h-1zM437 218h1v1h-1zM437 199h1v1h-1zM437 180h1v1h-1zM437 162h1v1h-1zM456 726h1v1h-1zM456 707h1v1h-1zM456 688h1v1h-1zM456 669h1v1h-1zM456 650h1v1h-1zM456 632h1v1h-1zM456 613h1v1h-1zM456 594h1v1h-1zM456 575h1v1h-1zM456 556h1v1h-1zM456 538h1v1h-1zM456 519h1v1h-1zM456 500h1v1h-1zM456 481h1v1h-1zM456 462h1v1h-1zM456 444h1v1h-1zM456 425h1v1h-1zM456 406h1v1h-1zM456 387h1v1h-1zM456 368h1v1h-1zM456 350h1v1h-1zM456 331h1v1h-1zM456 312h1v1h-1zM456 293h1v1h-1zM456 274h1v1h-1zM456 256h1v1h-1zM456 237h1v1h-1zM456 218h1v1h-1zM456 199h1v1h-1zM456 180h1v1h-1zM456 162h1v1h-1zM475 726h1v1h-1zM475 707h1v1h-1zM475 688h1v1h-1zM475 669h1v1h-1zM475 650h1v1h-1zM475 632h1v1h-1zM475 613h1v1h-1zM475 594h1v1h-1zM475 575h1v1h-1zM475 556h1v1h-1zM475 538h1v1h-1zM475 519h1v1h-1zM475 500h1v1h-1zM475 481h1v1h-1zM475 462h1v1h-1zM475 444h1v1h-1zM475 425h1v1h-1zM475 406h1v1h-1zM475 387h1v1h-1zM475 368h1v1h-1zM475 350h1v1h-1zM475 331h1v1h-1zM475 312h1v1h-1zM475 293h1v1h-1zM475 274h1v1h-1zM475 256h1v1h-1zM475 237h1v1h-1zM475 218h1v1h-1zM475 199h1v1h-1zM475 180h1v1h-1zM475 162h1v1h-1zM493 726h1v1h-1zM493 707h1v1h-1zM493 688h1v1h-1zM493 669h1v1h-1zM493 650h1v1h-1zM493 632h1v1h-1zM493 613h1v1h-1zM493 594h1v1h-1zM493 575h1v1h-1zM493 556h1v1h-1zM493 538h1v1h-1zM493 519h1v1h-1zM493 500h1v1h-1zM493 481h1v1h-1zM493 462h1v1h-1zM493 444h1v1h-1zM493 425h1v1h-1zM493 406h1v1h-1zM493 387h1v1h-1zM493 368h1v1h-1zM493 350h1v1h-1zM493 331h1v1h-1zM493 312h1v1h-1zM493 293h1v1h-1zM493 274h1v1h-1zM493 256h1v1h-1zM493 237h1v1h-1zM493 218h1v1h-1zM493 199h1v1h-1zM493 180h1v1h-1zM493 162h1v1h-1zM512 726h1v1h-1zM512 707h1v1h-1zM512 688h1v1h-1zM512 669h1v1h-1zM512 650h1v1h-1zM512 632h1v1h-1zM512 613h1v1h-1zM512 594h1v1h-1zM512 575h1v1h-1zM512 556h1v1h-1zM512 538h1v1h-1zM512 519h1v1h-1zM512 500h1v1h-1zM512 481h1v1h-1zM512 462h1v1h-1zM512 444h1v1h-1zM512 425h1v1h-1zM512 406h1v1h-1zM512 387h1v1h-1zM512 368h1v1h-1zM512 350h1v1h-1zM512 331h1v1h-1zM512 312h1v1h-1zM512 293h1v1h-1zM512 274h1v1h-1zM512 256h1v1h-1zM512 237h1v1h-1zM512 218h1v1h-1zM512 199h1v1h-1zM512 180h1v1h-1zM512 162h1v1h-1zM531 726h1v1h-1zM531 707h1v1h-1zM531 688h1v1h-1zM531 669h1v1h-1zM531 650h1v1h-1zM531 632h1v1h-1zM531 613h1v1h-1zM531 594h1v1h-1zM531 575h1v1h-1zM531 556h1v1h-1zM531 538h1v1h-1zM531 519h1v1h-1zM531 500h1v1h-1zM531 481h1v1h-1zM531 462h1v1h-1zM531 444h1v1h-1zM531 425h1v1h-1zM531 406h1v1h-1zM531 387h1v1h-1zM531 368h1v1h-1zM531 350h1v1h-1zM531 331h1v1h-1zM531 312h1v1h-1zM531 293h1v1h-1zM531 274h1v1h-1zM531 256h1v1h-1zM531 237h1v1h-1zM531 218h1v1h-1zM531 199h1v1h-1zM531 180h1v1h-1zM531 162h1v1h-1zM550 726h1v1h-1zM550 707h1v1h-1zM550 688h1v1h-1zM550 669h1v1h-1zM550 650h1v1h-1zM550 632h1v1h-1zM550 613h1v1h-1zM550 594h1v1h-1zM550 575h1v1h-1zM550 556h1v1h-1zM550 538h1v1h-1zM550 519h1v1h-1zM550 500h1v1h-1zM550 481h1v1h-1zM550 462h1v1h-1zM550 444h1v1h-1zM550 425h1v1h-1zM550 406h1v1h-1zM550 387h1v1h-1zM550 368h1v1h-1zM550 350h1v1h-1zM550 331h1v1h-1zM550 312h1v1h-1zM550 293h1v1h-1zM550 274h1v1h-1zM550 256h1v1h-1zM550 237h1v1h-1zM550 218h1v1h-1zM550 199h1v1h-1zM550 180h1v1h-1zM550 162h1v1h-1zM569 726h1v1h-1zM569 707h1v1h-1zM569 688h1v1h-1zM569 669h1v1h-1zM569 650h1v1h-1zM569 632h1v1h-1zM569 613h1v1h-1zM569 594h1v1h-1zM569 575h1v1h-1zM569 556h1v1h-1zM569 538h1v1h-1zM569 519h1v1h-1zM569 500h1v1h-1zM569 481h1v1h-1zM569 462h1v1h-1zM569 444h1v1h-1zM569 425h1v1h-1zM569 406h1v1h-1zM569 387h1v1h-1zM569 368h1v1h-1zM569 350h1v1h-1zM569 331h1v1h-1zM569 312h1v1h-1zM569 293h1v1h-1zM569 274h1v1h-1zM569 256h1v1h-1zM569 237h1v1h-1zM569 218h1v1h-1zM569 199h1v1h-1zM569 180h1v1h-1zM569 162h1v1h-1zM588 726h1v1h-1zM588 707h1v1h-1zM588 688h1v1h-1zM588 669h1v1h-1zM588 650h1v1h-1zM588 632h1v1h-1zM588 613h1v1h-1zM588 594h1v1h-1zM588 575h1v1h-1zM588 556h1v1h-1zM588 538h1v1h-1zM588 519h1v1h-1zM588 500h1v1h-1zM588 481h1v1h-1zM588 462h1v1h-1zM588 444h1v1h-1zM588 425h1v1h-1zM588 406h1v1h-1zM588 387h1v1h-1zM588 368h1v1h-1zM588 350h1v1h-1zM588 331h1v1h-1zM588 312h1v1h-1zM588 293h1v1h-1zM588 274h1v1h-1zM588 256h1v1h-1zM588 237h1v1h-1zM588 218h1v1h-1zM588 199h1v1h-1zM588 180h1v1h-1zM588 162h1v1h-1zM606 726h1v1h-1zM606 707h1v1h-1zM606 688h1v1h-1zM606 669h1v1h-1zM606 650h1v1h-1zM606 632h1v1h-1zM606 613h1v1h-1zM606 594h1v1h-1zM606 575h1v1h-1zM606 556h1v1h-1zM606 538h1v1h-1zM606 519h1v1h-1zM606 500h1v1h-1zM606 481h1v1h-1zM606 462h1v1h-1zM606 444h1v1h-1zM606 425h1v1h-1zM606 406h1v1h-1zM606 387h1v1h-1zM606 368h1v1h-1zM606 350h1v1h-1zM606 331h1v1h-1zM606 312h1v1h-1zM606 293h1v1h-1zM606 274h1v1h-1zM606 256h1v1h-1zM606 237h1v1h-1zM606 218h1v1h-1zM606 199h1v1h-1zM606 180h1v1h-1zM606 162h1v1h-1zM625 726h1v1h-1zM625 707h1v1h-1zM625 688h1v1h-1zM625 669h1v1h-1zM625 650h1v1h-1zM625 632h1v1h-1zM625 613h1v1h-1zM625 594h1v1h-1zM625 575h1v1h-1zM625 556h1v1h-1zM625 538h1v1h-1zM625 519h1v1h-1zM625 500h1v1h-1zM625 481h1v1h-1zM625 462h1v1h-1zM625 444h1v1h-1zM625 425h1v1h-1zM625 406h1v1h-1zM625 387h1v1h-1zM625 368h1v1h-1zM625 350h1v1h-1zM625 331h1v1h-1zM625 312h1v1h-1zM625 293h1v1h-1zM625 274h1v1h-1zM625 256h1v1h-1zM625 237h1v1h-1zM625 218h1v1h-1zM625 199h1v1h-1zM625 180h1v1h-1zM625 162h1v1h-1zM644 726h1v1h-1zM644 707h1v1h-1zM644 688h1v1h-1zM644 669h1v1h-1zM644 650h1v1h-1zM644 632h1v1h-1zM644 613h1v1h-1zM644 594h1v1h-1zM644 575h1v1h-1zM644 556h1v1h-1zM644 538h1v1h-1zM644 519h1v1h-1zM644 500h1v1h-1zM644 481h1v1h-1zM644 462h1v1h-1zM644 444h1v1h-1zM644 425h1v1h-1zM644 406h1v1h-1zM644 387h1v1h-1zM644 368h1v1h-1zM644 350h1v1h-1zM644 331h1v1h-1zM644 312h1v1h-1zM644 293h1v1h-1zM644 274h1v1h-1zM644 256h1v1h-1zM644 237h1v1h-1zM644 218h1v1h-1zM644 199h1v1h-1zM644 180h1v1h-1zM644 162h1v1h-1zM663 726h1v1h-1zM663 707h1v1h-1zM663 688h1v1h-1zM663 669h1v1h-1zM663 650h1v1h-1zM663 632h1v1h-1zM663 613h1v1h-1zM663 594h1v1h-1zM663 575h1v1h-1zM663 556h1v1h-1zM663 538h1v1h-1zM663 519h1v1h-1zM663 500h1v1h-1zM663 481h1v1h-1zM663 462h1v1h-1zM663 444h1v1h-1zM663 425h1v1h-1zM663 406h1v1h-1zM663 387h1v1h-1zM663 368h1v1h-1zM663 350h1v1h-1zM663 331h1v1h-1zM663 312h1v1h-1zM663 293h1v1h-1zM663 274h1v1h-1zM663 256h1v1h-1zM663 237h1v1h-1zM663 218h1v1h-1zM663 199h1v1h-1zM663 180h1v1h-1zM663 162h1v1h-1zM682 726h1v1h-1zM682 707h1v1h-1zM682 688h1v1h-1zM682 669h1v1h-1zM682 650h1v1h-1zM682 632h1v1h-1zM682 613h1v1h-1zM682 594h1v1h-1zM682 575h1v1h-1zM682 556h1v1h-1zM682 538h1v1h-1zM682 519h1v1h-1zM682 500h1v1h-1zM682 481h1v1h-1zM682 462h1v1h-1zM682 444h1v1h-1zM682 425h1v1h-1zM682 406h1v1h-1zM682 387h1v1h-1zM682 368h1v1h-1zM682 350h1v1h-1zM682 331h1v1h-1zM682 312h1v1h-1zM682 293h1v1h-1zM682 274h1v1h-1zM682 256h1v1h-1zM682 237h1v1h-1zM682 218h1v1h-1zM682 199h1v1h-1zM682 180h1v1h-1zM682 162h1v1h-1zM701 726h1v1h-1zM701 707h1v1h-1zM701 688h1v1h-1zM701 669h1v1h-1zM701 650h1v1h-1zM701 632h1v1h-1zM701 613h1v1h-1zM701 594h1v1h-1zM701 575h1v1h-1zM701 556h1v1h-1zM701 538h1v1h-1zM701 519h1v1h-1zM701 500h1v1h-1zM701 481h1v1h-1zM701 462h1v1h-1zM701 444h1v1h-1zM701 425h1v1h-1zM701 406h1v1h-1zM701 387h1v1h-1zM701 368h1v1h-1zM701 350h1v1h-1zM701 331h1v1h-1zM701 312h1v1h-1zM701 293h1v1h-1zM701 274h1v1h-1zM701 256h1v1h-1zM701 237h1v1h-1zM701 218h1v1h-1zM701 199h1v1h-1zM701 180h1v1h-1zM701 162h1v1h-1zM719 726h1v1h-1zM719 707h1v1h-1zM719 688h1v1h-1zM719 669h1v1h-1zM719 650h1v1h-1zM719 632h1v1h-1zM719 613h1v1h-1zM719 594h1v1h-1zM719 575h1v1h-1zM719 556h1v1h-1zM719 538h1v1h-1zM719 519h1v1h-1zM719 500h1v1h-1zM719 481h1v1h-1zM719 462h1v1h-1zM719 444h1v1h-1zM719 425h1v1h-1zM719 406h1v1h-1zM719 387h1v1h-1zM719 368h1v1h-1zM719 350h1v1h-1zM719 331h1v1h-1zM719 312h1v1h-1zM719 293h1v1h-1zM719 274h1v1h-1zM719 256h1v1h-1zM719 237h1v1h-1zM719 218h1v1h-1zM719 199h1v1h-1zM719 180h1v1h-1zM719 162h1v1h-1zM738 726h1v1h-1zM738 707h1v1h-1zM738 688h1v1h-1zM738 669h1v1h-1zM738 650h1v1h-1zM738 632h1v1h-1zM738 613h1v1h-1zM738 594h1v1h-1zM738 575h1v1h-1zM738 556h1v1h-1zM738 538h1v1h-1zM738 519h1v1h-1zM738 500h1v1h-1zM738 481h1v1h-1zM738 462h1v1h-1zM738 444h1v1h-1zM738 425h1v1h-1zM738 406h1v1h-1zM738 387h1v1h-1zM738 368h1v1h-1zM738 350h1v1h-1zM738 331h1v1h-1zM738 312h1v1h-1zM738 293h1v1h-1zM738 274h1v1h-1zM738 256h1v1h-1zM738 237h1v1h-1zM738 218h1v1h-1zM738 199h1v1h-1zM738 180h1v1h-1zM738 162h1v1h-1zM757 726h1v1h-1zM757 707h1v1h-1zM757 688h1v1h-1zM757 669h1v1h-1zM757 650h1v1h-1zM757 632h1v1h-1zM757 613h1v1h-1zM757 594h1v1h-1zM757 575h1v1h-1zM757 556h1v1h-1zM757 538h1v1h-1zM757 519h1v1h-1zM757 500h1v1h-1zM757 481h1v1h-1zM757 462h1v1h-1zM757 444h1v1h-1zM757 425h1v1h-1zM757 406h1v1h-1zM757 387h1v1h-1zM757 368h1v1h-1zM757 350h1v1h-1zM757 331h1v1h-1zM757 312h1v1h-1zM757 293h1v1h-1zM757 274h1v1h-1zM757 256h1v1h-1zM757 237h1v1h-1zM757 218h1v1h-1zM757 199h1v1h-1zM757 180h1v1h-1zM757 162h1v1h-1zM776 726h1v1h-1zM776 707h1v1h-1zM776 688h1v1h-1zM776 669h1v1h-1zM776 650h1v1h-1zM776 632h1v1h-1zM776 613h1v1h-1zM776 594h1v1h-1zM776 575h1v1h-1zM776 556h1v1h-1zM776 538h1v1h-1zM776 519h1v1h-1zM776 500h1v1h-1zM776 481h1v1h-1zM776 462h1v1h-1zM776 444h1v1h-1zM776 425h1v1h-1zM776 406h1v1h-1zM776 387h1v1h-1zM776 368h1v1h-1zM776 350h1v1h-1zM776 331h1v1h-1zM776 312h1v1h-1zM776 293h1v1h-1zM776 274h1v1h-1zM776 256h1v1h-1zM776 237h1v1h-1zM776 218h1v1h-1zM776 199h1v1h-1zM776 180h1v1h-1zM776 162h1v1h-1zM795 726h1v1h-1zM795 707h1v1h-1zM795 688h1v1h-1zM795 669h1v1h-1zM795 650h1v1h-1zM795 632h1v1h-1zM795 613h1v1h-1zM795 594h1v1h-1zM795 575h1v1h-1zM795 556h1v1h-1zM795 538h1v1h-1zM795 519h1v1h-1zM795 500h1v1h-1zM795 481h1v1h-1zM795 462h1v1h-1zM795 444h1v1h-1zM795 425h1v1h-1zM795 406h1v1h-1zM795 387h1v1h-1zM795 368h1v1h-1zM795 350h1v1h-1zM795 331h1v1h-1zM795 312h1v1h-1zM795 293h1v1h-1zM795 274h1v1h-1zM795 256h1v1h-1zM795 237h1v1h-1zM795 218h1v1h-1zM795 199h1v1h-1zM795 180h1v1h-1zM795 162h1v1h-1zM814 726h1v1h-1zM814 707h1v1h-1zM814 688h1v1h-1zM814 669h1v1h-1zM814 650h1v1h-1zM814 632h1v1h-1zM814 613h1v1h-1zM814 594h1v1h-1zM814 575h1v1h-1zM814 556h1v1h-1zM814 538h1v1h-1zM814 519h1v1h-1zM814 500h1v1h-1zM814 481h1v1h-1zM814 462h1v1h-1zM814 444h1v1h-1zM814 425h1v1h-1zM814 406h1v1h-1zM814 387h1v1h-1zM814 368h1v1h-1zM814 350h1v1h-1zM814 331h1v1h-1zM814 312h1v1h-1zM814 293h1v1h-1zM814 274h1v1h-1zM814 256h1v1h-1zM814 237h1v1h-1zM814 218h1v1h-1zM814 199h1v1h-1zM814 180h1v1h-1zM814 162h1v1h-1zM832 726h1v1h-1zM832 707h1v1h-1zM832 688h1v1h-1zM832 669h1v1h-1zM832 650h1v1h-1zM832 632h1v1h-1zM832 613h1v1h-1zM832 594h1v1h-1zM832 575h1v1h-1zM832 556h1v1h-1zM832 538h1v1h-1zM832 519h1v1h-1zM832 500h1v1h-1zM832 481h1v1h-1zM832 462h1v1h-1zM832 444h1v1h-1zM832 425h1v1h-1zM832 406h1v1h-1zM832 387h1v1h-1zM832 368h1v1h-1zM832 350h1v1h-1zM832 331h1v1h-1zM832 312h1v1h-1zM832 293h1v1h-1zM832 274h1v1h-1zM832 256h1v1h-1zM832 237h1v1h-1zM832 218h1v1h-1zM832 199h1v1h-1zM832 180h1v1h-1zM832 162h1v1h-1zM851 726h1v1h-1zM851 707h1v1h-1zM851 688h1v1h-1zM851 669h1v1h-1zM851 650h1v1h-1zM851 632h1v1h-1zM851 613h1v1h-1zM851 594h1v1h-1zM851 575h1v1h-1zM851 556h1v1h-1zM851 538h1v1h-1zM851 519h1v1h-1zM851 500h1v1h-1zM851 481h1v1h-1zM851 462h1v1h-1zM851 444h1v1h-1zM851 425h1v1h-1zM851 406h1v1h-1zM851 387h1v1h-1zM851 368h1v1h-1zM851 350h1v1h-1zM851 331h1v1h-1zM851 312h1v1h-1zM851 293h1v1h-1zM851 274h1v1h-1zM851 256h1v1h-1zM851 237h1v1h-1zM851 218h1v1h-1zM851 199h1v1h-1zM851 180h1v1h-1zM851 162h1v1h-1zM870 726h1v1h-1zM870 707h1v1h-1zM870 688h1v1h-1zM870 669h1v1h-1zM870 650h1v1h-1zM870 632h1v1h-1zM870 613h1v1h-1zM870 594h1v1h-1zM870 575h1v1h-1zM870 556h1v1h-1zM870 538h1v1h-1zM870 519h1v1h-1zM870 500h1v1h-1zM870 481h1v1h-1zM870 462h1v1h-1zM870 444h1v1h-1zM870 425h1v1h-1zM870 406h1v1h-1zM870 387h1v1h-1zM870 368h1v1h-1zM870 350h1v1h-1zM870 331h1v1h-1zM870 312h1v1h-1zM870 293h1v1h-1zM870 274h1v1h-1zM870 256h1v1h-1zM870 237h1v1h-1zM870 218h1v1h-1zM870 199h1v1h-1zM870 180h1v1h-1zM870 162h1v1h-1zM889 726h1v1h-1zM889 707h1v1h-1zM889 688h1v1h-1zM889 669h1v1h-1zM889 650h1v1h-1zM889 632h1v1h-1zM889 613h1v1h-1zM889 594h1v1h-1zM889 575h1v1h-1zM889 556h1v1h-1zM889 538h1v1h-1zM889 519h1v1h-1zM889 500h1v1h-1zM889 481h1v1h-1zM889 462h1v1h-1zM889 444h1v1h-1zM889 425h1v1h-1zM889 406h1v1h-1zM889 387h1v1h-1zM889 368h1v1h-1zM889 350h1v1h-1zM889 331h1v1h-1zM889 312h1v1h-1zM889 293h1v1h-1zM889 274h1v1h-1zM889 256h1v1h-1zM889 237h1v1h-1zM889 218h1v1h-1zM889 199h1v1h-1zM889 180h1v1h-1zM889 162h1v1h-1zM908 726h1v1h-1zM908 707h1v1h-1zM908 688h1v1h-1zM908 669h1v1h-1zM908 650h1v1h-1zM908 632h1v1h-1zM908 613h1v1h-1zM908 594h1v1h-1zM908 575h1v1h-1zM908 556h1v1h-1zM908 538h1v1h-1zM908 519h1v1h-1zM908 500h1v1h-1zM908 481h1v1h-1zM908 462h1v1h-1zM908 444h1v1h-1zM908 425h1v1h-1zM908 406h1v1h-1zM908 387h1v1h-1zM908 368h1v1h-1zM908 350h1v1h-1zM908 331h1v1h-1zM908 312h1v1h-1zM908 293h1v1h-1zM908 274h1v1h-1zM908 256h1v1h-1zM908 237h1v1h-1zM908 218h1v1h-1zM908 199h1v1h-1zM908 180h1v1h-1zM908 162h1v1h-1zM927 726h1v1h-1zM927 707h1v1h-1zM927 688h1v1h-1zM927 669h1v1h-1zM927 650h1v1h-1zM927 632h1v1h-1zM927 613h1v1h-1zM927 594h1v1h-1zM927 575h1v1h-1zM927 556h1v1h-1zM927 538h1v1h-1zM927 519h1v1h-1zM927 500h1v1h-1zM927 481h1v1h-1zM927 462h1v1h-1zM927 444h1v1h-1zM927 425h1v1h-1zM927 406h1v1h-1zM927 387h1v1h-1zM927 368h1v1h-1zM927 350h1v1h-1zM927 331h1v1h-1zM927 312h1v1h-1zM927 293h1v1h-1zM927 274h1v1h-1zM927 256h1v1h-1zM927 237h1v1h-1zM927 218h1v1h-1zM927 199h1v1h-1zM927 180h1v1h-1zM927 162h1v1h-1zM945 726h1v1h-1zM945 707h1v1h-1zM945 688h1v1h-1zM945 669h1v1h-1zM945 650h1v1h-1zM945 632h1v1h-1zM945 613h1v1h-1zM945 594h1v1h-1zM945 575h1v1h-1zM945 556h1v1h-1zM945 538h1v1h-1zM945 519h1v1h-1zM945 500h1v1h-1zM945 481h1v1h-1zM945 462h1v1h-1zM945 444h1v1h-1zM945 425h1v1h-1zM945 406h1v1h-1zM945 387h1v1h-1zM945 368h1v1h-1zM945 350h1v1h-1zM945 331h1v1h-1zM945 312h1v1h-1zM945 293h1v1h-1zM945 274h1v1h-1zM945 256h1v1h-1zM945 237h1v1h-1zM945 218h1v1h-1zM945 199h1v1h-1zM945 180h1v1h-1zM945 162h1v1h-1zM964 726h1v1h-1zM964 707h1v1h-1zM964 688h1v1h-1zM964 669h1v1h-1zM964 650h1v1h-1zM964 632h1v1h-1zM964 613h1v1h-1zM964 594h1v1h-1zM964 575h1v1h-1zM964 556h1v1h-1zM964 538h1v1h-1zM964 519h1v1h-1zM964 500h1v1h-1zM964 481h1v1h-1zM964 462h1v1h-1zM964 444h1v1h-1zM964 425h1v1h-1zM964 406h1v1h-1zM964 387h1v1h-1zM964 368h1v1h-1zM964 350h1v1h-1zM964 331h1v1h-1zM964 312h1v1h-1zM964 293h1v1h-1zM964 274h1v1h-1zM964 256h1v1h-1zM964 237h1v1h-1zM964 218h1v1h-1zM964 199h1v1h-1zM964 180h1v1h-1zM964 162h1v1h-1zM983 726h1v1h-1zM983 707h1v1h-1zM983 688h1v1h-1zM983 669h1v1h-1zM983 650h1v1h-1zM983 632h1v1h-1zM983 613h1v1h-1zM983 594h1v1h-1zM983 575h1v1h-1zM983 556h1v1h-1zM983 538h1v1h-1zM983 519h1v1h-1zM983 500h1v1h-1zM983 481h1v1h-1zM983 462h1v1h-1zM983 444h1v1h-1zM983 425h1v1h-1zM983 406h1v1h-1zM983 387h1v1h-1zM983 368h1v1h-1zM983 350h1v1h-1zM983 331h1v1h-1zM983 312h1v1h-1zM983 293h1v1h-1zM983 274h1v1h-1zM983 256h1v1h-1zM983 237h1v1h-1zM983 218h1v1h-1zM983 199h1v1h-1zM983 180h1v1h-1zM983 162h1v1h-1zM1002 726h1v1h-1zM1002 707h1v1h-1zM1002 688h1v1h-1zM1002 669h1v1h-1zM1002 650h1v1h-1zM1002 632h1v1h-1zM1002 613h1v1h-1zM1002 594h1v1h-1zM1002 575h1v1h-1zM1002 556h1v1h-1zM1002 538h1v1h-1zM1002 519h1v1h-1zM1002 500h1v1h-1zM1002 481h1v1h-1zM1002 462h1v1h-1zM1002 444h1v1h-1zM1002 425h1v1h-1zM1002 406h1v1h-1zM1002 387h1v1h-1zM1002 368h1v1h-1zM1002 350h1v1h-1zM1002 331h1v1h-1zM1002 312h1v1h-1zM1002 293h1v1h-1zM1002 274h1v1h-1zM1002 256h1v1h-1zM1002 237h1v1h-1zM1002 218h1v1h-1zM1002 199h1v1h-1zM1002 180h1v1h-1zM1002 162h1v1h-1zM1021 726h1v1h-1zM1021 707h1v1h-1zM1021 688h1v1h-1zM1021 669h1v1h-1zM1021 650h1v1h-1zM1021 632h1v1h-1zM1021 613h1v1h-1zM1021 594h1v1h-1zM1021 575h1v1h-1zM1021 556h1v1h-1zM1021 538h1v1h-1zM1021 519h1v1h-1zM1021 500h1v1h-1zM1021 481h1v1h-1zM1021 462h1v1h-1zM1021 444h1v1h-1zM1021 425h1v1h-1zM1021 406h1v1h-1zM1021 387h1v1h-1zM1021 368h1v1h-1zM1021 350h1v1h-1zM1021 331h1v1h-1zM1021 312h1v1h-1zM1021 293h1v1h-1zM1021 274h1v1h-1zM1021 256h1v1h-1zM1021 237h1v1h-1zM1021 218h1v1h-1zM1021 199h1v1h-1zM1021 180h1v1h-1zM1021 162h1v1h-1zM1039 726h1v1h-1zM1039 707h1v1h-1zM1039 688h1v1h-1zM1039 669h1v1h-1zM1039 650h1v1h-1zM1039 632h1v1h-1zM1039 613h1v1h-1zM1039 594h1v1h-1zM1039 575h1v1h-1zM1039 556h1v1h-1zM1039 538h1v1h-1zM1039 519h1v1h-1zM1039 500h1v1h-1zM1039 481h1v1h-1zM1039 462h1v1h-1zM1039 444h1v1h-1zM1039 425h1v1h-1zM1039 406h1v1h-1zM1039 387h1v1h-1zM1039 368h1v1h-1zM1039 350h1v1h-1zM1039 331h1v1h-1zM1039 312h1v1h-1zM1039 293h1v1h-1zM1039 274h1v1h-1zM1039 256h1v1h-1zM1039 237h1v1h-1zM1039 218h1v1h-1zM1039 199h1v1h-1zM1039 180h1v1h-1zM1039 162h1v1h-1zM1058 726h1v1h-1zM1058 707h1v1h-1zM1058 688h1v1h-1zM1058 669h1v1h-1zM1058 650h1v1h-1zM1058 632h1v1h-1zM1058 613h1v1h-1zM1058 594h1v1h-1zM1058 575h1v1h-1zM1058 556h1v1h-1zM1058 538h1v1h-1zM1058 519h1v1h-1zM1058 500h1v1h-1zM1058 481h1v1h-1zM1058 462h1v1h-1zM1058 444h1v1h-1zM1058 425h1v1h-1zM1058 406h1v1h-1zM1058 387h1v1h-1zM1058 368h1v1h-1zM1058 350h1v1h-1zM1058 331h1v1h-1zM1058 312h1v1h-1zM1058 293h1v1h-1zM1058 274h1v1h-1zM1058 256h1v1h-1zM1058 237h1v1h-1zM1058 218h1v1h-1zM1058 199h1v1h-1zM1058 180h1v1h-1zM1058 162h1v1h-1zM1077 726h1v1h-1zM1077 707h1v1h-1zM1077 688h1v1h-1zM1077 669h1v1h-1zM1077 650h1v1h-1zM1077 632h1v1h-1zM1077 613h1v1h-1zM1077 594h1v1h-1zM1077 575h1v1h-1zM1077 556h1v1h-1zM1077 538h1v1h-1zM1077 519h1v1h-1zM1077 500h1v1h-1zM1077 481h1v1h-1zM1077 462h1v1h-1zM1077 444h1v1h-1zM1077 425h1v1h-1zM1077 406h1v1h-1zM1077 387h1v1h-1zM1077 368h1v1h-1zM1077 350h1v1h-1zM1077 331h1v1h-1zM1077 312h1v1h-1zM1077 293h1v1h-1zM1077 274h1v1h-1zM1077 256h1v1h-1zM1077 237h1v1h-1zM1077 218h1v1h-1zM1077 199h1v1h-1zM1077 180h1v1h-1zM1077 162h1v1h-1zM1096 726h1v1h-1zM1096 707h1v1h-1zM1096 688h1v1h-1zM1096 669h1v1h-1zM1096 650h1v1h-1zM1096 632h1v1h-1zM1096 613h1v1h-1zM1096 594h1v1h-1zM1096 575h1v1h-1zM1096 556h1v1h-1zM1096 538h1v1h-1zM1096 519h1v1h-1zM1096 500h1v1h-1zM1096 481h1v1h-1zM1096 462h1v1h-1zM1096 444h1v1h-1zM1096 425h1v1h-1zM1096 406h1v1h-1zM1096 387h1v1h-1zM1096 368h1v1h-1zM1096 350h1v1h-1zM1096 331h1v1h-1zM1096 312h1v1h-1zM1096 293h1v1h-1zM1096 274h1v1h-1zM1096 256h1v1h-1zM1096 237h1v1h-1zM1096 218h1v1h-1zM1096 199h1v1h-1zM1096 180h1v1h-1zM1096 162h1v1h-1zM1115 726h1v1h-1zM1115 707h1v1h-1zM1115 688h1v1h-1zM1115 669h1v1h-1zM1115 650h1v1h-1zM1115 632h1v1h-1zM1115 613h1v1h-1zM1115 594h1v1h-1zM1115 575h1v1h-1zM1115 556h1v1h-1zM1115 538h1v1h-1zM1115 519h1v1h-1zM1115 500h1v1h-1zM1115 481h1v1h-1zM1115 462h1v1h-1zM1115 444h1v1h-1zM1115 425h1v1h-1zM1115 406h1v1h-1zM1115 387h1v1h-1zM1115 368h1v1h-1zM1115 350h1v1h-1zM1115 331h1v1h-1zM1115 312h1v1h-1zM1115 293h1v1h-1zM1115 274h1v1h-1zM1115 256h1v1h-1zM1115 237h1v1h-1zM1115 218h1v1h-1zM1115 199h1v1h-1zM1115 180h1v1h-1zM1115 162h1v1h-1z" fill="#3c3c3c"/><g fill="none" stroke="#dcdcdc" stroke-width="1"><circle cx="606.5" cy="443.4" r="188.0"/><circle cx="606.5" cy="443.4" r="169.2"/><circle cx="606.5" cy="443.4" r="157.9"/><circle cx="606.5" cy="443.4" r="146.6"/><circle cx="606.5" cy="443.4" r="67.7"/><circle cx="606.5" cy="443.4" r="56.4"/><circle cx="606.5" cy="443.4" r="5.0"/><path d="M621.82 297.60L623.01 286.36M636.98 300.00L639.33 288.95M651.80 303.98L655.29 293.23M666.13 309.47L670.72 299.15M692.67 324.80L699.31 315.66M704.59 334.45L712.16 326.06M715.45 345.31L723.84 337.74M725.10 357.23L734.24 350.59M740.43 383.77L750.75 379.18M745.92 398.10L756.67 394.61M749.90 412.92L760.95 410.57M752.30 428.08L763.54 426.89M752.30 458.72L763.54 459.91M749.90 473.88L760.95 476.23M745.92 488.70L756.67 492.19M740.43 503.03L750.75 507.62M725.10 529.57L734.24 536.21M715.45 541.49L723.84 549.06M704.59 552.35L712.16 560.74M692.67 562.00L699.31 571.14M666.13 577.33L670.72 587.65M651.80 582.82L655.29 593.57M636.98 586.80L639.33 597.85M621.82 589.20L623.01 600.44M591.18 589.20L589.99 600.44M576.02 586.80L573.67 597.85M561.20 582.82L557.71 593.57M546.87 577.33L542.28 587.65M520.33 562.00L513.69 571.14M508.41 552.35L500.84 560.74M497.55 541.49L489.16 549.06M487.90 529.57L478.76 536.21M472.57 503.03L462.25 507.62M467.08 488.70L456.33 492.19M463.10 473.88L452.05 476.23M460.70 458.72L449.46 459.91M460.70 428.08L449.46 426.89M463.10 412.92L452.05 410.57M467.08 398.10L456.33 394.61M472.57 383.77L462.25 379.18M487.90 357.23L478.76 350.59M497.55 345.31L489.16 337.74M508.41 334.45L500.84 326.06M520.33 324.80L513.69 315.66M546.87 309.47L542.28 299.15M561.20 303.98L557.71 293.23M576.02 300.00L573.67 288.95M591.18 297.60L589.99 286.36M606.50 387.00L606.50 375.70M612.40 387.31L613.58 376.07M618.23 388.23L620.58 377.18M623.93 389.76L627.42 379.01M629.44 391.88L634.04 381.55M634.70 394.56L640.35 384.77M639.65 397.77L646.29 388.63M644.24 401.49L651.80 393.09M648.41 405.66L656.81 398.10M652.13 410.25L661.27 403.61M655.34 415.20L665.13 409.55M658.02 420.46L668.35 415.86M660.14 425.97L670.89 422.48M661.67 431.67L672.72 429.32M662.59 437.50L673.83 436.32M662.90 443.40L674.20 443.40M662.59 449.30L673.83 450.48M661.67 455.13L672.72 457.48M660.14 460.83L670.89 464.32M658.02 466.34L668.35 470.94M655.34 471.60L665.13 477.25M652.13 476.55L661.27 483.19M648.41 481.14L656.81 488.70M644.24 485.31L651.80 493.71M639.65 489.03L646.29 498.17M634.70 492.24L640.35 502.03M629.44 494.92L634.04 505.25M623.93 497.04L627.42 507.79M618.23 498.57L620.58 509.62M612.40 499.49L613.58 510.73M606.50 499.80L606.50 511.10M600.60 499.49L599.42 510.73M594.77 498.57L592.42 509.62M589.07 497.04L585.58 507.79M583.56 494.92L578.96 505.25M578.30 492.24L572.65 502.03M573.35 489.03L566.71 498.17M568.76 485.31L561.20 493.71M564.59 481.14L556.19 488.70M560.87 476.55L551.73 483.19M557.66 471.60L547.87 477.25M554.98 466.34L544.65 470.94M552.86 460.83L542.11 464.32M551.33 455.13L540.28 457.48M550.41 449.30L539.17 450.48M550.10 443.40L538.80 443.40M550.41 437.50L539.17 436.32M551.33 431.67L540.28 429.32M552.86 425.97L542.11 422.48M554.98 420.46L544.65 415.86M557.66 415.20L547.87 409.55M560.87 410.25L551.73 403.61M564.59 405.66L556.19 398.10M568.76 401.49L561.20 393.09M573.35 397.77L566.71 388.63M578.30 394.56L572.65 384.77M583.56 391.88L578.96 381.55M589.07 389.76L585.58 379.01M594.77 388.23L592.42 377.18M600.60 387.31L599.42 376.07"/></g><path d="M606.50 300.40L610.10 291.15L606.50 281.90L602.90 291.15ZM678.00 319.56L685.74 313.35L687.25 303.54L679.51 309.75ZM730.34 371.90L740.15 370.39L746.36 362.65L736.55 364.16ZM749.50 443.40L758.75 447.00L768.00 443.40L758.75 439.80ZM730.34 514.90L736.55 522.64L746.36 524.15L740.15 516.41ZM678.00 567.24L679.51 577.05L687.25 583.26L685.74 573.45ZM606.50 586.40L602.90 595.65L606.50 604.90L610.10 595.65ZM535.00 567.24L527.26 573.45L525.75 583.26L533.49 577.05ZM482.66 514.90L472.85 516.41L466.64 524.15L476.45 522.64ZM463.50 443.40L454.25 439.80L445.00 443.40L454.25 447.00ZM482.66 371.90L476.45 364.16L466.64 362.65L472.85 370.39ZM535.00 319.56L533.49 309.75L525.75 303.54L527.26 313.35Z" fill="#f4f4f4"/><g font-family="Liberation Sans" font-size="44" fill="#fff"><text x="700.16" y="397.65">2</text><text x="716.70" y="458.80">3</text><text x="700.31" y="519.95">4</text><text x="655.45" y="564.71">5</text><text x="594.15" y="581.10">6</text><text x="533.05" y="564.71">7</text><text x="488.34" y="519.95">8</text><text x="471.95" y="458.80">9</text><text x="499.04" y="397.65">0</text><text x="604.55" y="336.50">2</text></g><path d="M673.55 321.99H670.95Q668.25 326.49 661.75 329.49V333.29Q666.25 331.79 669.35 329.49V352.89H673.55ZM491.24 366.75H488.64Q485.94 371.25 479.44 374.25V378.05Q483.94 376.55 487.04 374.25V397.65H491.24ZM541.00 321.99H538.40Q535.70 326.49 529.20 329.49V333.29Q533.70 331.79 536.80 329.49V352.89H541.00ZM561.50 321.99H558.90Q556.20 326.49 549.70 329.49V333.29Q554.20 331.79 557.30 329.49V352.89H561.50ZM597.95 305.60H595.35Q592.65 310.10 586.15 313.10V316.90Q590.65 315.40 593.75 313.10V336.50H597.95Z" fill="#fff"/><g stroke="#a80000" stroke-width="1" fill="none"><path d="M398.5 631.5H438.5M418.5 611.5V651.5"/><circle cx="418.5" cy="631.5" r="5"/></g></svg><svg class="abs" style="left:72px;top:132px" width="1046" height="23" viewBox="72 132 1046 23"><path d="M98.5 152V155M117.5 148V155M136.5 152V155M155.5 148V155M174.5 152V155M192.5 148V155M211.5 152V155M230.5 148V155M249.5 152V155M268.5 148V155M286.5 152V155M305.5 148V155M324.5 152V155M343.5 148V155M362.5 152V155M380.5 148V155M399.5 152V155M418.5 148V155M437.5 152V155M456.5 148V155M474.5 152V155M493.5 148V155M512.5 152V155M531.5 148V155M550.5 152V155M568.5 148V155M587.5 152V155M606.5 148V155M625.5 152V155M644.5 148V155M662.5 152V155M681.5 148V155M700.5 152V155M719.5 148V155M738.5 152V155M757.5 148V155M775.5 152V155M794.5 148V155M813.5 152V155M832.5 148V155M851.5 152V155M869.5 148V155M888.5 152V155M907.5 148V155M926.5 152V155M945.5 148V155M963.5 152V155M982.5 148V155M1001.5 152V155M1020.5 148V155M1039.5 152V155M1057.5 148V155M1076.5 152V155M1095.5 148V155M1114.5 152V155" stroke="#555" stroke-width="1"/><g font-family="Liberation Sans" font-size="9.2" fill="#000" stroke="#000" stroke-width="0.2" text-anchor="middle"><text x="117.6" y="141.3">-160</text><text x="155.2" y="141.3">-140</text><text x="192.8" y="141.3">-120</text><text x="230.4" y="141.3">-100</text><text x="268.1" y="141.3">-80</text><text x="305.7" y="141.3">-60</text><text x="343.3" y="141.3">-40</text><text x="380.9" y="141.3">-20</text><text x="418.5" y="141.3">0</text><text x="456.1" y="141.3">20</text><text x="493.7" y="141.3">40</text><text x="531.3" y="141.3">60</text><text x="568.9" y="141.3">80</text><text x="606.6" y="141.3">100</text><text x="644.2" y="141.3">120</text><text x="681.8" y="141.3">140</text><text x="719.4" y="141.3">160</text><text x="757.0" y="141.3">180</text><text x="794.6" y="141.3">200</text><text x="832.2" y="141.3">220</text><text x="869.8" y="141.3">240</text><text x="907.5" y="141.3">260</text><text x="945.1" y="141.3">280</text><text x="982.7" y="141.3">300</text><text x="1020.3" y="141.3">320</text><text x="1057.9" y="141.3">340</text><text x="1095.5" y="141.3">360</text></g><path d="M726 145H737.5L731.7 151Z" fill="#000"/></svg><svg class="abs" style="left:72px;top:155px" width="23" height="577" viewBox="72 155 23 577"><path d="M92 726.5H95M88 707.5H95M92 688.5H95M88 669.5H95M92 650.5H95M88 632.5H95M92 613.5H95M88 594.5H95M92 575.5H95M88 556.5H95M92 538.5H95M88 519.5H95M92 500.5H95M88 481.5H95M92 462.5H95M88 444.5H95M92 425.5H95M88 406.5H95M92 387.5H95M88 368.5H95M92 350.5H95M88 331.5H95M92 312.5H95M88 293.5H95M92 274.5H95M88 256.5H95M92 237.5H95M88 218.5H95M92 199.5H95M88 180.5H95M92 162.5H95" stroke="#555" stroke-width="1"/><g font-family="Liberation Sans" font-size="9.2" fill="#000" stroke="#000" stroke-width="0.2" text-anchor="middle"><text transform="translate(81.3 706.7) rotate(-90)" x="0" y="0">-40</text><text transform="translate(81.3 669.1) rotate(-90)" x="0" y="0">-20</text><text transform="translate(81.3 631.5) rotate(-90)" x="0" y="0">0</text><text transform="translate(81.3 593.9) rotate(-90)" x="0" y="0">20</text><text transform="translate(81.3 556.3) rotate(-90)" x="0" y="0">40</text><text transform="translate(81.3 518.7) rotate(-90)" x="0" y="0">60</text><text transform="translate(81.3 481.1) rotate(-90)" x="0" y="0">80</text><text transform="translate(81.3 443.5) rotate(-90)" x="0" y="0">100</text><text transform="translate(81.3 405.9) rotate(-90)" x="0" y="0">120</text><text transform="translate(81.3 368.3) rotate(-90)" x="0" y="0">140</text><text transform="translate(81.3 330.7) rotate(-90)" x="0" y="0">160</text><text transform="translate(81.3 293.1) rotate(-90)" x="0" y="0">180</text><text transform="translate(81.3 255.5) rotate(-90)" x="0" y="0">200</text><text transform="translate(81.3 217.9) rotate(-90)" x="0" y="0">220</text><text transform="translate(81.3 180.3) rotate(-90)" x="0" y="0">240</text></g><path d="M85 536V547.5L91 541.7Z" fill="#000"/></svg><div class="abs" style="left:1118px;top:155px;width:16px;height:577px;background:#f8f8f8"></div><div class="abs" style="left:1123px;top:303px;width:8px;height:279px;border-radius:4px;background:#808080"></div><div class="abs" style="left:95px;top:732px;width:968px;height:16px;background:#f8f8f8"></div><div class="abs" style="left:161px;top:737px;width:836px;height:8px;border-radius:4px;background:#808080"></div><div class="abs" style="left:1063px;top:732px;width:71px;height:16px;background:#ebebeb"></div><div class="t" style="left:1082px;top:734px;font-size:13px;color:#111;letter-spacing:0.1px">10 &lt; 100</div><div class="abs" style="left:72px;top:748px;width:1062px;height:23px;background:#fff;border-top:1px solid #c8c8c8;border-bottom:1px solid #c8c8c8"></div><div class="t" style="left:77.5px;top:752px;font-size:13px;color:#0c0cc4;letter-spacing:0.27px"><i>Opdracht:</i> line</div><div class="abs" style="left:72px;top:771px;width:1062px;height:27px;background:#ebebeb"></div><div class="t" style="left:73px;top:779px;font-size:13px;color:#111;letter-spacing:0.4px">Opdracht:</div><div class="abs" style="left:137px;top:776px;width:970px;height:18px;background:#fff"></div><div class="abs" style="left:1107px;top:772px;width:26px;height:26px;background:linear-gradient(#e2e2e2,#f5f5f5);border:1px solid #adadad"></div><div class="abs" style="left:1113px;top:780px;width:14px;height:10px;border:1px solid #555;border-top:3px solid #000;background:#f0f0f0"></div><div class="abs" style="left:1123px;top:781px;width:1px;height:1px;background:#888"></div><div class="abs" style="left:1134px;top:108px;width:10px;height:690px;background:#ebebeb"></div><div class="abs" style="left:1144px;top:108px;width:11px;height:690px;background:#e3e3e3"></div><div class="abs" style="left:1135px;top:333px;width:20px;height:157px;background:#1a82fb;border-radius:5px 0 0 5px"></div><div class="t" style="left:1145px;top:411px;font-size:13px;letter-spacing:0.3px;color:#fff;transform:translate(-50%,-50%) rotate(-90deg)">Eigenschappen-editor</div><div class="abs" style="left:1135px;top:494px;width:20px;height:82px;background:#d3d3d3;border-radius:5px 0 0 5px"></div><div class="t" style="left:1145px;top:534.5px;font-size:13px;letter-spacing:0.15px;color:#333;transform:translate(-50%,-50%) rotate(-90deg)">Lagenlijst</div><div class="abs" style="left:1155px;top:108px;width:300px;height:690px;background:#ebebeb;border-left:1px solid #cfcfcf;border-right:1px solid #cfcfcf"></div><div class="abs" style="left:1156px;top:108px;width:298px;height:23px;background:linear-gradient(#ececec,#dadada);border-bottom:2px solid #c6c6c6"></div><div class="t" style="left:1264px;top:113px;font-size:12px;color:#222">Eigenschappen-editor</div><svg class="abs" style="left:1156px;top:109px" width="40" height="20" viewBox="1156 109 40 20"><circle cx="1164" cy="118" r="7" fill="#5c5c5c"/><path d="M1161.3 115.3L1166.7 120.7M1166.7 115.3L1161.3 120.7" stroke="#eee" stroke-width="1.5" stroke-linecap="round"/><circle cx="1182" cy="118" r="7" fill="#5c5c5c"/><rect x="1181.2" y="114.8" width="4.6" height="4.3" fill="none" stroke="#fff" stroke-width="0.9"/><rect x="1178.5" y="117.2" width="5" height="4" fill="#5c5c5c" stroke="#fff" stroke-width="0.9"/></svg><div class="t" style="left:1168.5px;top:147.8px;font-size:13px;color:#111;letter-spacing:0.17px">Selectie:</div><div class="abs" style="left:1228.5px;top:143.3px;width:213px;height:21.4px;border-radius:5px;background:#fff;border:1px solid #cdd3dc;box-shadow:0 0.5px 0.5px rgba(0,0,0,0.08)"></div><div class="abs" style="left:1423.5px;top:146.0px;width:16px;height:16px;border-radius:4px;background:#1a7ef6"></div><svg class="abs" style="left:1423.5px;top:146.0px" width="16" height="16" viewBox="0 0 16 16"><path d="M4.8 6.4L8.0 3.4000000000000004L11.2 6.4M4.8 9.6L8.0 12.6L11.2 9.6" fill="none" stroke="#fff" stroke-width="1.4" stroke-linecap="round" stroke-linejoin="round"/></svg><div class="t" style="left:1232px;top:147.8px;font-size:13px;color:#111;letter-spacing:0.17px">Geen selectie</div><div class="abs" style="left:1423px;top:146px;width:16px;height:16px;border-radius:4px;background:#1a7ef6"></div><svg class="abs" style="left:1423px;top:146px" width="16" height="16" viewBox="0 0 16 16"><path d="M4.8 6.4L8.0 3.4000000000000004L11.2 6.4M4.8 9.6L8.0 12.6L11.2 9.6" fill="none" stroke="#fff" stroke-width="1.4" stroke-linecap="round" stroke-linejoin="round"/></svg><div class="t" style="left:1175.5px;top:171.5px;font-size:11px;color:#b4b4b4;letter-spacing:0.37px">Algemeene eigenschappen</div><div class="abs" style="left:1168px;top:183.5px;width:273.5px;height:185px;border-radius:5px;background:#e4e4e4;border:1px solid #dedede"></div><div class="t" style="right:232.5px;top:200.3px;font-size:13px;color:#adadad;letter-spacing:0.22px;margin-right:-0.22px">Laag:</div><div class="abs" style="left:1270.5px;top:195.4px;width:134px;height:21.3px;border-radius:5px;background:#fff;border:1px solid #cdd3dc;box-shadow:0 0.5px 0.5px rgba(0,0,0,0.08)"></div><div class="abs" style="left:1386px;top:198.05px;width:16px;height:16px;border-radius:4px;background:#1a7ef6"></div><svg class="abs" style="left:1386px;top:198.05px" width="16" height="16" viewBox="0 0 16 16"><path d="M4.8 6.4L8.0 3.4000000000000004L11.2 6.4M4.8 9.6L8.0 12.6L11.2 9.6" fill="none" stroke="#fff" stroke-width="1.4" stroke-linecap="round" stroke-linejoin="round"/></svg><div class="abs" style="left:1407px;top:193.5px;width:25.5px;height:25px;background:#e8e8e8;border:1px solid #c8c8c8"></div><svg class="abs" style="left:1407px;top:193.5px" width="26" height="25" viewBox="0 0 26 25"><path d="M6.5 8.5H19.5M6.5 12.5H19.5M6.5 16.5H19.5" stroke="#a8a8a8" stroke-width="1.3"/></svg><div class="t" style="right:232.5px;top:226.0px;font-size:13px;color:#adadad;letter-spacing:0.22px;margin-right:-0.22px">Kleur:</div><div class="abs" style="left:1270.5px;top:221.7px;width:162px;height:20.7px;border-radius:5px;background:#fff;border:1px solid #cdd3dc;box-shadow:0 0.5px 0.5px rgba(0,0,0,0.08)"></div><div class="abs" style="left:1414px;top:224.04999999999998px;width:16px;height:16px;border-radius:4px;background:#1a7ef6"></div><svg class="abs" style="left:1414px;top:224.04999999999998px" width="16" height="16" viewBox="0 0 16 16"><path d="M4.8 6.4L8.0 3.4000000000000004L11.2 6.4M4.8 9.6L8.0 12.6L11.2 9.6" fill="none" stroke="#fff" stroke-width="1.4" stroke-linecap="round" stroke-linejoin="round"/></svg><div class="abs" style="left:1274px;top:227.5px;width:16px;height:10px;border:1px solid #555;background:#fff"></div><div class="t" style="left:1296px;top:226.0px;font-size:13px;color:#111;letter-spacing:0.17px">Door laag bepaald</div><div class="t" style="right:232.5px;top:249.8px;font-size:13px;color:#adadad;letter-spacing:0.22px;margin-right:-0.22px">Lijndikte:</div><div class="abs" style="left:1270.5px;top:245.8px;width:162px;height:20.5px;border-radius:5px;background:#fff;border:1px solid #cdd3dc;box-shadow:0 0.5px 0.5px rgba(0,0,0,0.08)"></div><div class="abs" style="left:1414px;top:248.05px;width:16px;height:16px;border-radius:4px;background:#1a7ef6"></div><svg class="abs" style="left:1414px;top:248.05px" width="16" height="16" viewBox="0 0 16 16"><path d="M4.8 6.4L8.0 3.4000000000000004L11.2 6.4M4.8 9.6L8.0 12.6L11.2 9.6" fill="none" stroke="#fff" stroke-width="1.4" stroke-linecap="round" stroke-linejoin="round"/></svg><div class="abs" style="left:1274px;top:255.5px;width:16px;height:1px;background:#777"></div><div class="t" style="left:1296px;top:249.8px;font-size:13px;color:#111;letter-spacing:0.17px">Door laag bepaald</div><div class="t" style="right:232.5px;top:273.5px;font-size:13px;color:#adadad;letter-spacing:0.22px;margin-right:-0.22px">Lijntype:</div><div class="abs" style="left:1270.5px;top:270px;width:162px;height:20.4px;border-radius:5px;background:#fff;border:1px solid #cdd3dc;box-shadow:0 0.5px 0.5px rgba(0,0,0,0.08)"></div><div class="abs" style="left:1414px;top:272.2px;width:16px;height:16px;border-radius:4px;background:#1a7ef6"></div><svg class="abs" style="left:1414px;top:272.2px" width="16" height="16" viewBox="0 0 16 16"><path d="M4.8 6.4L8.0 3.4000000000000004L11.2 6.4M4.8 9.6L8.0 12.6L11.2 9.6" fill="none" stroke="#fff" stroke-width="1.4" stroke-linecap="round" stroke-linejoin="round"/></svg><div class="t" style="left:1274.4px;top:272.3px;font-size:13px;color:#111;letter-spacing:0.17px">Door laag bepaald</div><div class="t" style="right:232.5px;top:297.6px;font-size:13px;color:#adadad;letter-spacing:0.22px;margin-right:-0.22px">Lijntypeschaal:</div><div class="abs" style="left:1271px;top:294.6px;width:160.5px;height:19px;background:#fff;border-bottom:1px solid #d4d4d4;border-top:1px solid #e8e8e8"></div><div class="t" style="right:232.5px;top:320.4px;font-size:13px;color:#adadad;letter-spacing:0.22px;margin-right:-0.22px">Tekenvolgorde:</div><div class="abs" style="left:1271px;top:317.4px;width:160.5px;height:19px;background:#fff;border-bottom:1px solid #d4d4d4;border-top:1px solid #e8e8e8"></div><div class="t" style="right:232.5px;top:343.4px;font-size:13px;color:#adadad;letter-spacing:0.22px;margin-right:-0.22px">Handle:</div><div class="abs" style="left:1271px;top:340.4px;width:160.5px;height:19px;background:#fff;border-bottom:1px solid #d4d4d4;border-top:1px solid #e8e8e8"></div><svg class="abs" style="left:1300px;top:403px" width="100" height="100" viewBox="1300 403 100 100"><circle cx="1350" cy="452.8" r="34" fill="none" stroke="#e2e7ec" stroke-width="4"/><circle cx="1350" cy="452.8" r="36.3" fill="none" stroke="#c3cfdb" stroke-width="2"/><circle cx="1350" cy="452.8" r="38.3" fill="none" stroke="#a9bacb" stroke-width="2"/><path d="M1350.3 453.3V475.3L1355.1 470.4L1358.7 479.2L1362.3 477.7L1358.7 469.2H1365.3Z" fill="#fff" stroke="#000" stroke-width="1.2" stroke-linejoin="round"/></svg><div class="abs" style="left:1455px;top:108px;width:45px;height:690px;background:linear-gradient(90deg,#ececec,#e4e4e4 40%,#c8c8c8)"></div><div class="abs" style="left:0;top:798px;width:1500px;height:46px;background:#dcdcdc"></div><div class="t" style="left:3px;top:807.5px;font-size:10px;color:#111;">-</div><div class="t" style="left:3px;top:828px;font-size:10px;color:#111;">-</div><div class="abs" style="left:253px;top:802px;width:2px;height:39px;background:linear-gradient(90deg,#8a8a8a 50%,#fcfcfc 50%)"></div><div class="t" style="left:257px;top:807.5px;font-size:10px;color:#111;">-</div><div class="t" style="left:257px;top:828px;font-size:10px;color:#111;">-</div><div class="t" style="right:801.5px;top:812px;font-size:10px;color:#111;letter-spacing:0.15px;text-align:right;line-height:11px">Object of gebied selecteren<br>Object of referentiepunt verplaatsen</div><svg class="abs" style="left:500px;top:800px" width="1000" height="44" viewBox="500 800 1000 44"><circle cx="509.5" cy="822" r="3" fill="#c6c6c6"/><circle cx="943.3" cy="822" r="3" fill="#c6c6c6"/><circle cx="1272" cy="822" r="3" fill="#c6c6c6"/><rect x="717.5" y="806" width="17" height="29.5" rx="8.5" fill="#fff" stroke="#333" stroke-width="1"/><path d="M717.5 819.5H734.5M726 806V819.5" stroke="#333" stroke-width="0.9"/><rect x="724.2" y="808.5" width="3.6" height="7.5" rx="1.8" fill="#fff" stroke="#333" stroke-width="0.9"/></svg><div class="t" style="left:949px;top:817.5px;font-size:10px;color:#111;letter-spacing:0.15px">Geen objecten geselecteerd.</div><svg class="abs" style="left:1455px;top:108px" width="45" height="690" viewBox="1455 108 45 690"><rect x="1462" y="116" width="2" height="2" fill="#9a9a9a"/><rect x="1468" y="116" width="2" height="2" fill="#9a9a9a"/><rect x="1474" y="116" width="2" height="2" fill="#9a9a9a"/><rect x="1480" y="116" width="2" height="2" fill="#9a9a9a"/><rect x="1486" y="116" width="2" height="2" fill="#9a9a9a"/><rect x="1456.5" y="120.5" width="42" height="42.0" rx="5" fill="#b5b5b5"/><rect x="1456.5" y="269.5" width="42" height="42.0" rx="5" fill="#b5b5b5"/><rect x="1456.5" y="418" width="42" height="42.5" rx="5" fill="#b5b5b5"/><rect x="1463.5" y="127.5" width="27" height="27" fill="#fff" stroke="#000" stroke-width="1"/><rect x="1463.5" y="127" width="27.5" height="4.8" fill="#000"/><rect x="1464.7" y="128.2" width="3.2" height="3.2" fill="#fff"/><path d="M1472 139L1479 135V146L1472 150Z" fill="#999" stroke="#555" stroke-width="0.7"/><path d="M1474 140L1484 134.5V145.5L1474 151Z" fill="#fff" stroke="#666" stroke-width="0.8"/><path d="M1479 146L1482 138L1480.5 146Z" fill="none" stroke="#f03030" stroke-width="0.8"/><rect x="1463.5" y="174.5" width="27" height="27" fill="#fff" stroke="#000" stroke-width="1"/><rect x="1463.5" y="174" width="27.5" height="4.8" fill="#000"/><rect x="1464.7" y="175.2" width="3.2" height="3.2" fill="#fff"/><rect x="1470.5" y="184" width="10" height="7.5" fill="#f0e6c0" stroke="#555" stroke-width="0.8"/><circle cx="1478.5" cy="190.5" r="4.5" fill="#f0e6c0" fill-opacity="0.85" stroke="#555" stroke-width="0.8"/><rect x="1463.5" y="220.5" width="27" height="27" fill="#fff" stroke="#000" stroke-width="1"/><rect x="1463.5" y="220" width="27.5" height="4.8" fill="#000"/><rect x="1464.7" y="221.2" width="3.2" height="3.2" fill="#fff"/><rect x="1469.5" y="231" width="15" height="10" rx="2" fill="#f4f4f4" stroke="#c0cce0" stroke-width="0.9"/><path d="M1458 261.5H1500" stroke="#555" stroke-width="1" stroke-dasharray="1 2"/><rect x="1463.5" y="276.5" width="27" height="27" fill="#fff" stroke="#000" stroke-width="1"/><rect x="1463.5" y="276" width="27.5" height="4.8" fill="#000"/><rect x="1464.7" y="277.2" width="3.2" height="3.2" fill="#fff"/><path d="M1467 283.5h3v3h-3zM1467 289h3v3h-3zM1467 294.5h3v3h-3z" fill="#000"/><path d="M1473 284H1487V287H1473ZM1473 289.5H1487V292.5H1473ZM1473 295H1487V298H1473Z" fill="none" stroke="#111" stroke-width="0.7"/><rect x="1463.5" y="323.5" width="27" height="27" fill="#fff" stroke="#000" stroke-width="1"/><rect x="1463.5" y="323" width="27.5" height="4.8" fill="#000"/><rect x="1464.7" y="324.2" width="3.2" height="3.2" fill="#fff"/><path d="M1470.5 331.5H1484.5L1478.5 338V345L1476.5 343.5V338Z" fill="#a8a8a8" stroke="#666" stroke-width="0.7"/><rect x="1463.5" y="369.5" width="27" height="27" fill="#fff" stroke="#000" stroke-width="1"/><rect x="1463.5" y="369" width="27.5" height="4.8" fill="#000"/><rect x="1464.7" y="370.2" width="3.2" height="3.2" fill="#fff"/><path d="M1470 376L1475 381H1480V389H1475L1470 394Z" fill="#fff" stroke="#333" stroke-width="0.8"/><rect x="1475.5" y="381" width="6" height="8" fill="#b0b0b0"/><path d="M1466 385H1488" stroke="#f0a0a0" stroke-width="0.8" stroke-dasharray="1.5 1"/><path d="M1458 410.5H1500" stroke="#555" stroke-width="1" stroke-dasharray="1 2"/><rect x="1463.5" y="425.5" width="27" height="27" fill="#fff" stroke="#000" stroke-width="1"/><rect x="1463.5" y="425" width="27.5" height="4.8" fill="#000"/><rect x="1464.7" y="426.2" width="3.2" height="3.2" fill="#fff"/><path d="M1466 435H1474M1466 437.5H1473M1466 440H1475M1466 442.5H1475" stroke="#777" stroke-width="0.6"/><path d="M1464 446.5H1490.5" stroke="#111" stroke-width="0.7"/><path d="M1472 449.5H1489" stroke="#555" stroke-width="0.6"/><rect x="1463.5" y="472.5" width="27" height="27" fill="#fff" stroke="#000" stroke-width="1"/><rect x="1463.5" y="472" width="27.5" height="4.8" fill="#000"/><rect x="1464.7" y="473.2" width="3.2" height="3.2" fill="#fff"/><rect x="1470" y="482" width="13" height="14" rx="1" fill="#c08a40" stroke="#8e6020" stroke-width="0.6"/><rect x="1472" y="484" width="9" height="10.5" fill="#f4f4f4"/><rect x="1474" y="480.5" width="5" height="3" fill="#909090"/></svg></div></body></html>
